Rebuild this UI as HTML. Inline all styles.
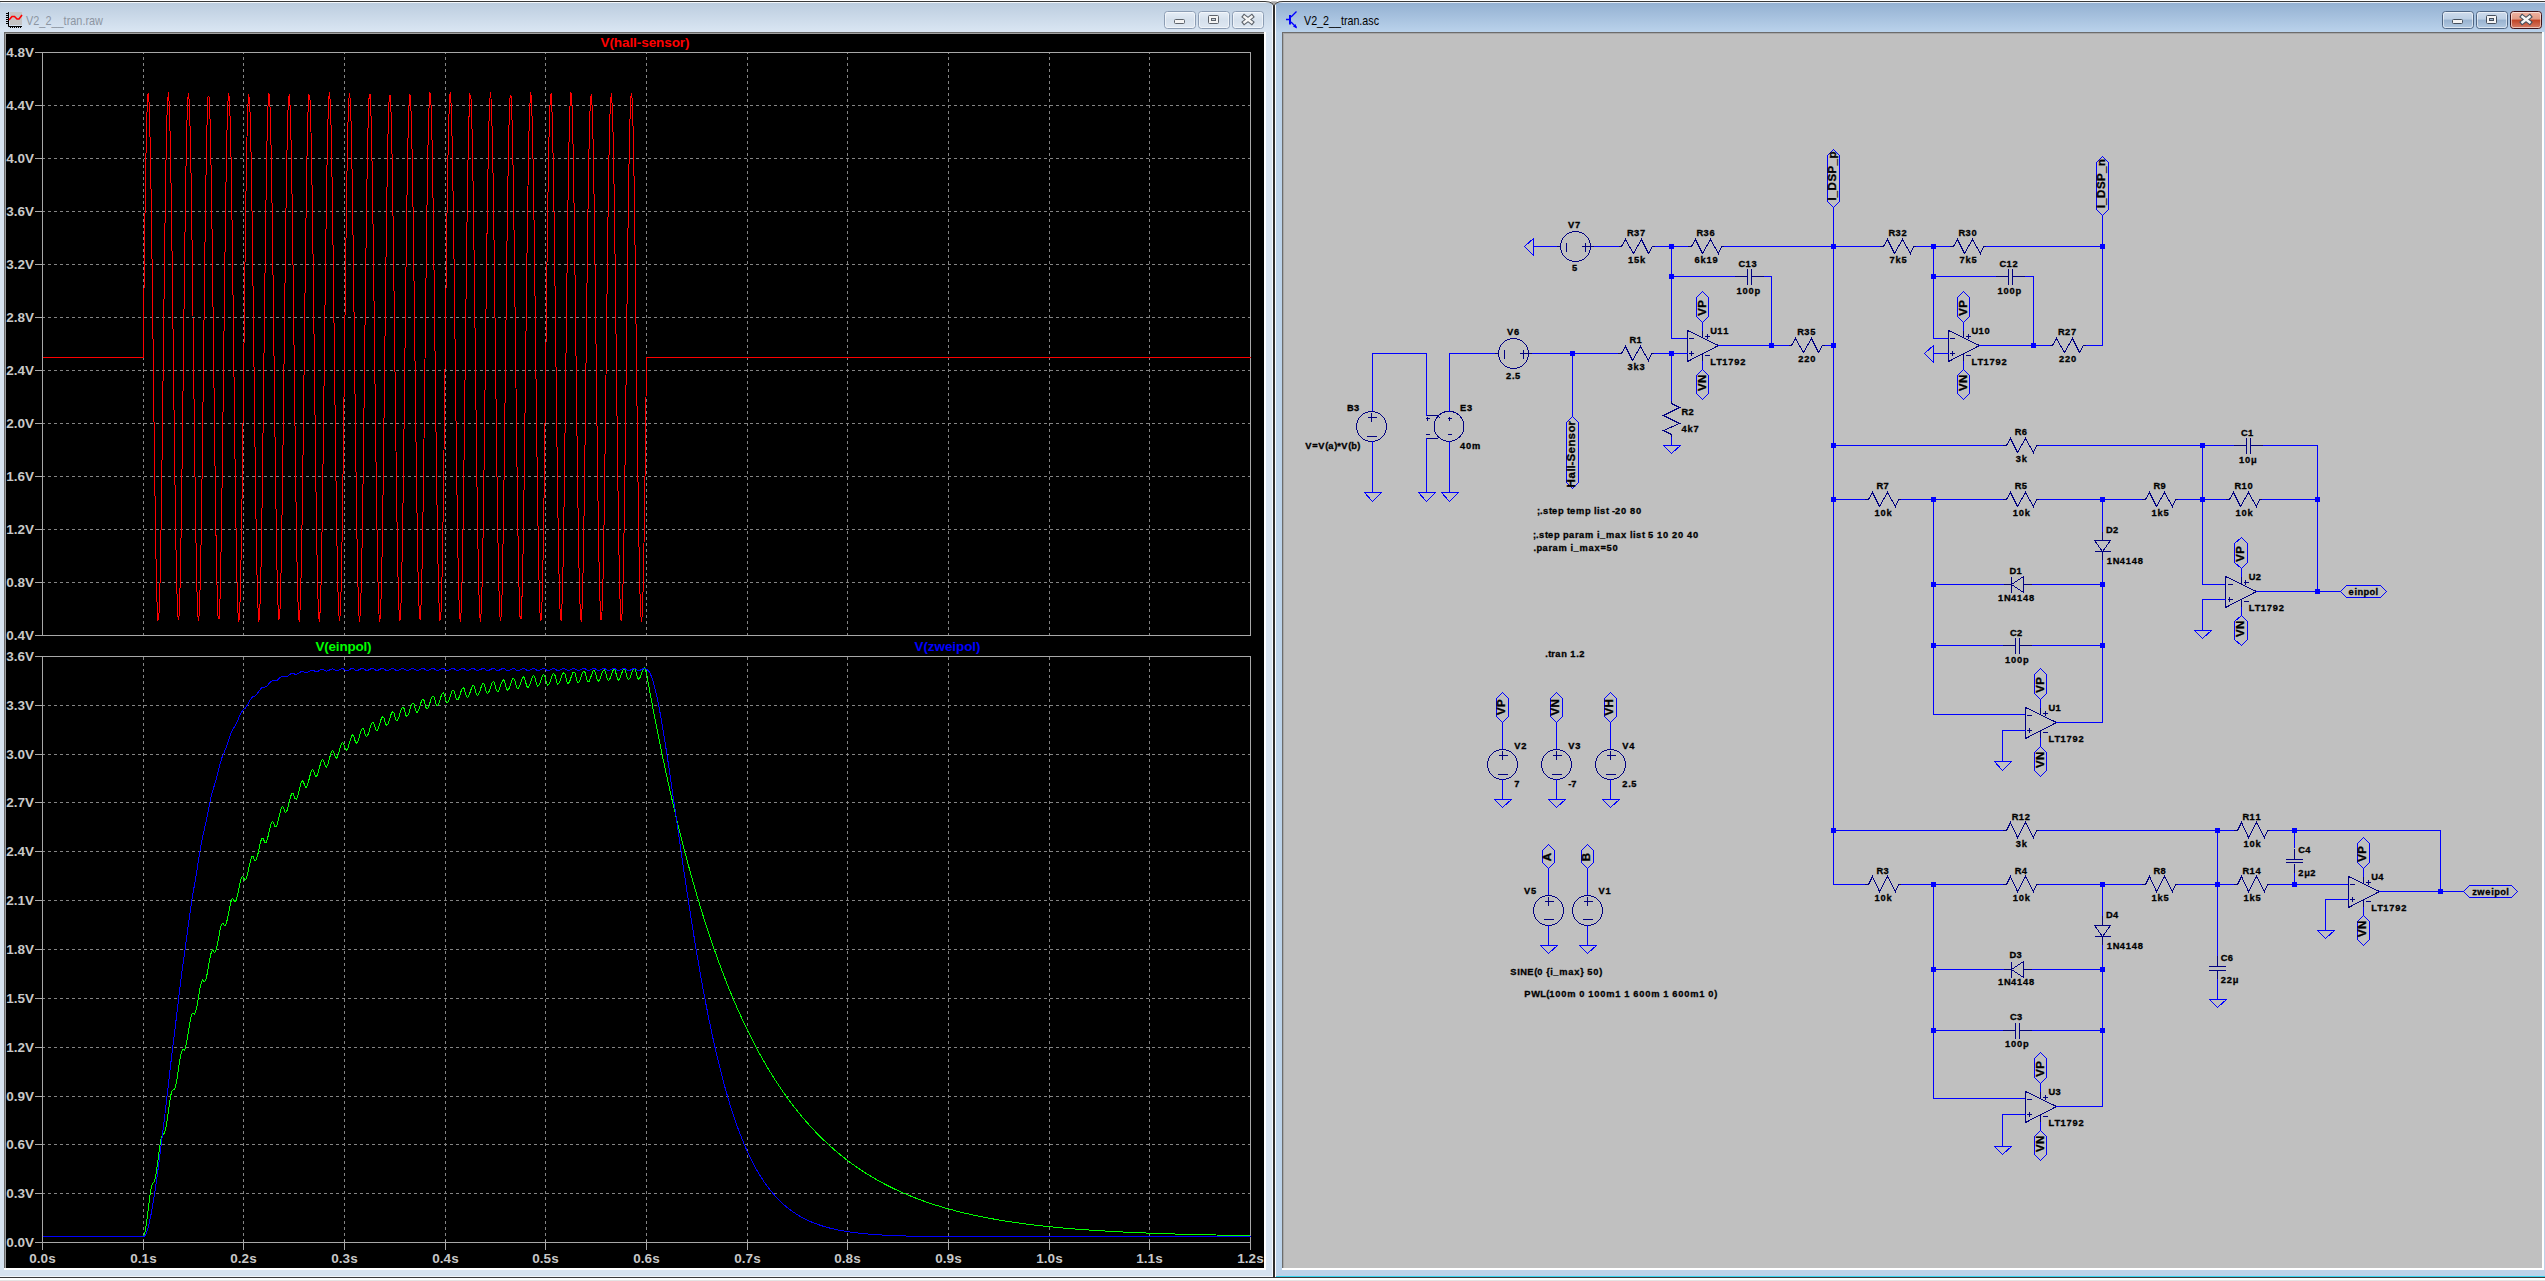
<!DOCTYPE html>
<html><head><meta charset="utf-8"><title>LTspice</title>
<style>
html,body{margin:0;padding:0;background:#f0f0f0;overflow:hidden;}
svg{display:block;font-family:"Liberation Sans",sans-serif;}
</style></head><body>
<svg width="2545" height="1281" viewBox="0 0 2545 1281">
<rect x="0" y="0" width="2545" height="1281" fill="#f0f0f0" />
<rect x="0" y="0" width="2545" height="1" fill="#ffffff" />
<rect x="0" y="1" width="2545" height="1" fill="#3a3a3a" />
<rect x="0" y="1277" width="2545" height="1" fill="#3a3a3a" />
<rect x="0" y="1278" width="2545" height="2" fill="#ffffff" />
<rect x="0" y="1280" width="2545" height="1" fill="#e3e3e3" />
<defs><linearGradient id="tgi" x1="0" y1="0" x2="0" y2="1"><stop offset="0" stop-color="#bccddf"/><stop offset="1" stop-color="#dae6f3"/></linearGradient><linearGradient id="tga" x1="0" y1="0" x2="0" y2="1"><stop offset="0" stop-color="#94b1d2"/><stop offset="1" stop-color="#bad2eb"/></linearGradient><linearGradient id="bti" x1="0" y1="0" x2="0" y2="1"><stop offset="0" stop-color="#e6eef7"/><stop offset="0.5" stop-color="#d5e0ec"/><stop offset="1" stop-color="#dfe8f2"/></linearGradient><linearGradient id="bta" x1="0" y1="0" x2="0" y2="1"><stop offset="0" stop-color="#cfdcec"/><stop offset="0.45" stop-color="#bccfe4"/><stop offset="0.5" stop-color="#98b2cf"/><stop offset="1" stop-color="#b4cbe3"/></linearGradient><linearGradient id="btc" x1="0" y1="0" x2="0" y2="1"><stop offset="0" stop-color="#f0b4a4"/><stop offset="0.45" stop-color="#e29c86"/><stop offset="0.5" stop-color="#c04224"/><stop offset="1" stop-color="#d8806a"/></linearGradient></defs>
<rect x="0" y="2" width="1273" height="1275" fill="#d7e3f0" />
<rect x="0" y="3" width="1273" height="29" fill="url(#tgi)" />
<rect x="1" y="2" width="1271" height="1" fill="#f4f8fc" />
<rect x="1273" y="2" width="2" height="1276" fill="#2e2e2e" />
<rect x="1272" y="5" width="1" height="1271" fill="#f4f8fc" />
<rect x="0" y="1276" width="1273" height="1" fill="#f2f6fa" />
<rect x="4" y="32" width="1262" height="1238" fill="#ffffff" />
<rect x="4" y="32" width="1260" height="1236" fill="#696969" />
<rect x="5" y="33" width="1259" height="1235" fill="#a0a0a0" />
<rect x="6" y="34" width="1258" height="1234" fill="#000000" />
<rect x="1275" y="2" width="1270" height="1275" fill="#bcd3ea" />
<rect x="1276" y="3" width="1269" height="29" fill="url(#tga)" />
<rect x="1275" y="2" width="1" height="1275" fill="#ffffff" />
<rect x="1276" y="2" width="1269" height="1" fill="#e6eef8" />
<rect x="1276" y="1276" width="1269" height="1" fill="#37d4ee" />
<rect x="1282" y="32" width="1262" height="1238" fill="#ffffff" />
<rect x="1282" y="32" width="1260" height="1236" fill="#6c6c6c" />
<rect x="1283" y="33" width="1259" height="1235" fill="#a8a8a8" />
<rect x="1284" y="34" width="1258" height="1234" fill="#c0c0c0" />
<path d="M1265 2 Q1272 2 1274 6 Q1276 2 1283 2 L1283 0 L1265 0 Z" fill="#ffffff"/>
<path d="M1265 1.5 Q1272.5 1.5 1274 6 Q1275.5 1.5 1283 1.5" fill="none" stroke="#3a3a3a" stroke-width="1.2"/>
<path d="M1271 1.2 L1277 1.2 L1274 5 Z" fill="#a8a8a8"/>
<text x="26" y="25" font-size="13.5" fill="#8d96a2" font-family="Liberation Sans" textLength="77" lengthAdjust="spacingAndGlyphs">V2_2__tran.raw</text>
<text x="1304" y="25" font-size="13.5" fill="#000000" font-family="Liberation Sans" textLength="75" lengthAdjust="spacingAndGlyphs">V2_2__tran.asc</text>
<rect x="10" y="12" width="12" height="13" fill="#c4c4c4" />
<path d="M8.5 12 V26.5 H22" stroke="#000" stroke-width="1" fill="none"/>
<rect x="6" y="13" width="2" height="1" fill="#000" />
<rect x="6" y="15" width="2" height="1" fill="#000" />
<rect x="6" y="17" width="2" height="1" fill="#000" />
<rect x="6" y="19" width="2" height="1" fill="#000" />
<rect x="6" y="21" width="2" height="1" fill="#000" />
<rect x="6" y="23" width="2" height="1" fill="#000" />
<rect x="10" y="27" width="1" height="1" fill="#000" />
<rect x="12" y="27" width="1" height="1" fill="#000" />
<rect x="14" y="27" width="1" height="1" fill="#000" />
<rect x="16" y="27" width="1" height="1" fill="#000" />
<rect x="18" y="27" width="1" height="1" fill="#000" />
<rect x="20" y="27" width="1" height="1" fill="#000" />
<polyline points="9,20 12,16.5 14.5,16.5 17,19 19,19 22,15" stroke="#ff0000" stroke-width="1.6" fill="none"/>
<rect x="1289" y="15" width="2" height="9.5" fill="#0000ff"/>
<path d="M1286 19.5 H1289 M1291 17 L1296.5 11.5 M1291 22 L1296.5 27.5" stroke="#0000ff" stroke-width="1.4" fill="none"/>
<path d="M1293 26.5 L1297 28.5 L1295.5 24 Z" fill="#0000ff"/>
<rect x="1164.5" y="11.5" width="31" height="17" rx="3" fill="url(#bti)" stroke="#8c9db4" stroke-width="1"/>
<rect x="1165.5" y="12.5" width="29" height="15" rx="2" fill="none" stroke="#ffffff" stroke-opacity="0.55" stroke-width="1"/>
<rect x="1198.5" y="11.5" width="31" height="17" rx="3" fill="url(#bti)" stroke="#8c9db4" stroke-width="1"/>
<rect x="1199.5" y="12.5" width="29" height="15" rx="2" fill="none" stroke="#ffffff" stroke-opacity="0.55" stroke-width="1"/>
<rect x="1232.5" y="11.5" width="31" height="17" rx="3" fill="url(#bti)" stroke="#8c9db4" stroke-width="1"/>
<rect x="1233.5" y="12.5" width="29" height="15" rx="2" fill="none" stroke="#ffffff" stroke-opacity="0.55" stroke-width="1"/>
<rect x="1174.5" y="19.5" width="10" height="4" rx="1" fill="#f4f4f4" stroke="#5d636b" stroke-width="1"/>
<rect x="1208.5" y="15.5" width="10" height="8" rx="1" fill="#f4f4f4" stroke="#5d636b" stroke-width="1"/>
<rect x="1211.5" y="18.5" width="4" height="2" fill="#c9d3de" stroke="#5d636b" stroke-width="1"/>
<path d="M1244.4 16.7 L1251.6 22.3 M1251.6 16.7 L1244.4 22.3" stroke="#5d636b" stroke-width="4.6" stroke-linecap="square"/>
<path d="M1244.4 16.7 L1251.6 22.3 M1251.6 16.7 L1244.4 22.3" stroke="#f6f6f6" stroke-width="2.4" stroke-linecap="square"/>
<rect x="2442.5" y="11.5" width="31" height="17" rx="3" fill="url(#bta)" stroke="#4f6684" stroke-width="1"/>
<rect x="2443.5" y="12.5" width="29" height="15" rx="2" fill="none" stroke="#ffffff" stroke-opacity="0.55" stroke-width="1"/>
<rect x="2476.5" y="11.5" width="31" height="17" rx="3" fill="url(#bta)" stroke="#4f6684" stroke-width="1"/>
<rect x="2477.5" y="12.5" width="29" height="15" rx="2" fill="none" stroke="#ffffff" stroke-opacity="0.55" stroke-width="1"/>
<rect x="2510.5" y="11.5" width="31" height="17" rx="3" fill="url(#btc)" stroke="#3f1218" stroke-width="1"/>
<rect x="2511.5" y="12.5" width="29" height="15" rx="2" fill="none" stroke="#ffffff" stroke-opacity="0.55" stroke-width="1"/>
<rect x="2452.5" y="19.5" width="10" height="4" rx="1" fill="#f4f4f4" stroke="#454f5c" stroke-width="1"/>
<rect x="2486.5" y="15.5" width="10" height="8" rx="1" fill="#f4f4f4" stroke="#454f5c" stroke-width="1"/>
<rect x="2489.5" y="18.5" width="4" height="2" fill="#9ab4d0" stroke="#454f5c" stroke-width="1"/>
<path d="M2522.4 16.7 L2529.6 22.3 M2529.6 16.7 L2522.4 22.3" stroke="#454f5c" stroke-width="4.6" stroke-linecap="square"/>
<path d="M2522.4 16.7 L2529.6 22.3 M2529.6 16.7 L2522.4 22.3" stroke="#f6f6f6" stroke-width="2.4" stroke-linecap="square"/>
<line x1="43" y1="105.5" x2="1250" y2="105.5" stroke="#848484" stroke-width="1" stroke-dasharray="3 3" stroke-dashoffset="1" shape-rendering="crispEdges"/>
<line x1="43" y1="158.5" x2="1250" y2="158.5" stroke="#848484" stroke-width="1" stroke-dasharray="3 3" stroke-dashoffset="1" shape-rendering="crispEdges"/>
<line x1="43" y1="211.5" x2="1250" y2="211.5" stroke="#848484" stroke-width="1" stroke-dasharray="3 3" stroke-dashoffset="1" shape-rendering="crispEdges"/>
<line x1="43" y1="264.5" x2="1250" y2="264.5" stroke="#848484" stroke-width="1" stroke-dasharray="3 3" stroke-dashoffset="1" shape-rendering="crispEdges"/>
<line x1="43" y1="317.5" x2="1250" y2="317.5" stroke="#848484" stroke-width="1" stroke-dasharray="3 3" stroke-dashoffset="1" shape-rendering="crispEdges"/>
<line x1="43" y1="370.5" x2="1250" y2="370.5" stroke="#848484" stroke-width="1" stroke-dasharray="3 3" stroke-dashoffset="1" shape-rendering="crispEdges"/>
<line x1="43" y1="423.5" x2="1250" y2="423.5" stroke="#848484" stroke-width="1" stroke-dasharray="3 3" stroke-dashoffset="1" shape-rendering="crispEdges"/>
<line x1="43" y1="476.5" x2="1250" y2="476.5" stroke="#848484" stroke-width="1" stroke-dasharray="3 3" stroke-dashoffset="1" shape-rendering="crispEdges"/>
<line x1="43" y1="529.5" x2="1250" y2="529.5" stroke="#848484" stroke-width="1" stroke-dasharray="3 3" stroke-dashoffset="1" shape-rendering="crispEdges"/>
<line x1="43" y1="582.5" x2="1250" y2="582.5" stroke="#848484" stroke-width="1" stroke-dasharray="3 3" stroke-dashoffset="1" shape-rendering="crispEdges"/>
<line x1="143.5" y1="53" x2="143.5" y2="635" stroke="#848484" stroke-width="1" stroke-dasharray="3 3" stroke-dashoffset="2" shape-rendering="crispEdges"/>
<line x1="243.5" y1="53" x2="243.5" y2="635" stroke="#848484" stroke-width="1" stroke-dasharray="3 3" stroke-dashoffset="2" shape-rendering="crispEdges"/>
<line x1="344.5" y1="53" x2="344.5" y2="635" stroke="#848484" stroke-width="1" stroke-dasharray="3 3" stroke-dashoffset="2" shape-rendering="crispEdges"/>
<line x1="445.5" y1="53" x2="445.5" y2="635" stroke="#848484" stroke-width="1" stroke-dasharray="3 3" stroke-dashoffset="2" shape-rendering="crispEdges"/>
<line x1="545.5" y1="53" x2="545.5" y2="635" stroke="#848484" stroke-width="1" stroke-dasharray="3 3" stroke-dashoffset="2" shape-rendering="crispEdges"/>
<line x1="646.5" y1="53" x2="646.5" y2="635" stroke="#848484" stroke-width="1" stroke-dasharray="3 3" stroke-dashoffset="2" shape-rendering="crispEdges"/>
<line x1="747.5" y1="53" x2="747.5" y2="635" stroke="#848484" stroke-width="1" stroke-dasharray="3 3" stroke-dashoffset="2" shape-rendering="crispEdges"/>
<line x1="847.5" y1="53" x2="847.5" y2="635" stroke="#848484" stroke-width="1" stroke-dasharray="3 3" stroke-dashoffset="2" shape-rendering="crispEdges"/>
<line x1="948.5" y1="53" x2="948.5" y2="635" stroke="#848484" stroke-width="1" stroke-dasharray="3 3" stroke-dashoffset="2" shape-rendering="crispEdges"/>
<line x1="1049.5" y1="53" x2="1049.5" y2="635" stroke="#848484" stroke-width="1" stroke-dasharray="3 3" stroke-dashoffset="2" shape-rendering="crispEdges"/>
<line x1="1149.5" y1="53" x2="1149.5" y2="635" stroke="#848484" stroke-width="1" stroke-dasharray="3 3" stroke-dashoffset="2" shape-rendering="crispEdges"/>
<rect x="42.5" y="52.5" width="1208" height="583" fill="none" stroke="#a8a8a8" stroke-width="1" shape-rendering="crispEdges"/>
<rect x="35" y="52" width="7" height="1" fill="#a8a8a8" />
<text x="34" y="57" font-size="13.5" fill="#c8c8c8" text-anchor="end" font-weight="bold">4.8V</text>
<rect x="35" y="105" width="7" height="1" fill="#a8a8a8" />
<text x="34" y="110" font-size="13.5" fill="#c8c8c8" text-anchor="end" font-weight="bold">4.4V</text>
<rect x="35" y="158" width="7" height="1" fill="#a8a8a8" />
<text x="34" y="163" font-size="13.5" fill="#c8c8c8" text-anchor="end" font-weight="bold">4.0V</text>
<rect x="35" y="211" width="7" height="1" fill="#a8a8a8" />
<text x="34" y="216" font-size="13.5" fill="#c8c8c8" text-anchor="end" font-weight="bold">3.6V</text>
<rect x="35" y="264" width="7" height="1" fill="#a8a8a8" />
<text x="34" y="269" font-size="13.5" fill="#c8c8c8" text-anchor="end" font-weight="bold">3.2V</text>
<rect x="35" y="317" width="7" height="1" fill="#a8a8a8" />
<text x="34" y="322" font-size="13.5" fill="#c8c8c8" text-anchor="end" font-weight="bold">2.8V</text>
<rect x="35" y="370" width="7" height="1" fill="#a8a8a8" />
<text x="34" y="375" font-size="13.5" fill="#c8c8c8" text-anchor="end" font-weight="bold">2.4V</text>
<rect x="35" y="423" width="7" height="1" fill="#a8a8a8" />
<text x="34" y="428" font-size="13.5" fill="#c8c8c8" text-anchor="end" font-weight="bold">2.0V</text>
<rect x="35" y="476" width="7" height="1" fill="#a8a8a8" />
<text x="34" y="481" font-size="13.5" fill="#c8c8c8" text-anchor="end" font-weight="bold">1.6V</text>
<rect x="35" y="529" width="7" height="1" fill="#a8a8a8" />
<text x="34" y="534" font-size="13.5" fill="#c8c8c8" text-anchor="end" font-weight="bold">1.2V</text>
<rect x="35" y="582" width="7" height="1" fill="#a8a8a8" />
<text x="34" y="587" font-size="13.5" fill="#c8c8c8" text-anchor="end" font-weight="bold">0.8V</text>
<rect x="35" y="635" width="7" height="1" fill="#a8a8a8" />
<text x="34" y="640" font-size="13.5" fill="#c8c8c8" text-anchor="end" font-weight="bold">0.4V</text>
<line x1="43" y1="705.5" x2="1250" y2="705.5" stroke="#848484" stroke-width="1" stroke-dasharray="3 3" stroke-dashoffset="1" shape-rendering="crispEdges"/>
<line x1="43" y1="754.5" x2="1250" y2="754.5" stroke="#848484" stroke-width="1" stroke-dasharray="3 3" stroke-dashoffset="1" shape-rendering="crispEdges"/>
<line x1="43" y1="802.5" x2="1250" y2="802.5" stroke="#848484" stroke-width="1" stroke-dasharray="3 3" stroke-dashoffset="1" shape-rendering="crispEdges"/>
<line x1="43" y1="851.5" x2="1250" y2="851.5" stroke="#848484" stroke-width="1" stroke-dasharray="3 3" stroke-dashoffset="1" shape-rendering="crispEdges"/>
<line x1="43" y1="900.5" x2="1250" y2="900.5" stroke="#848484" stroke-width="1" stroke-dasharray="3 3" stroke-dashoffset="1" shape-rendering="crispEdges"/>
<line x1="43" y1="949.5" x2="1250" y2="949.5" stroke="#848484" stroke-width="1" stroke-dasharray="3 3" stroke-dashoffset="1" shape-rendering="crispEdges"/>
<line x1="43" y1="998.5" x2="1250" y2="998.5" stroke="#848484" stroke-width="1" stroke-dasharray="3 3" stroke-dashoffset="1" shape-rendering="crispEdges"/>
<line x1="43" y1="1047.5" x2="1250" y2="1047.5" stroke="#848484" stroke-width="1" stroke-dasharray="3 3" stroke-dashoffset="1" shape-rendering="crispEdges"/>
<line x1="43" y1="1096.5" x2="1250" y2="1096.5" stroke="#848484" stroke-width="1" stroke-dasharray="3 3" stroke-dashoffset="1" shape-rendering="crispEdges"/>
<line x1="43" y1="1144.5" x2="1250" y2="1144.5" stroke="#848484" stroke-width="1" stroke-dasharray="3 3" stroke-dashoffset="1" shape-rendering="crispEdges"/>
<line x1="43" y1="1193.5" x2="1250" y2="1193.5" stroke="#848484" stroke-width="1" stroke-dasharray="3 3" stroke-dashoffset="1" shape-rendering="crispEdges"/>
<line x1="143.5" y1="657" x2="143.5" y2="1242" stroke="#848484" stroke-width="1" stroke-dasharray="3 3" stroke-dashoffset="0" shape-rendering="crispEdges"/>
<line x1="243.5" y1="657" x2="243.5" y2="1242" stroke="#848484" stroke-width="1" stroke-dasharray="3 3" stroke-dashoffset="0" shape-rendering="crispEdges"/>
<line x1="344.5" y1="657" x2="344.5" y2="1242" stroke="#848484" stroke-width="1" stroke-dasharray="3 3" stroke-dashoffset="0" shape-rendering="crispEdges"/>
<line x1="445.5" y1="657" x2="445.5" y2="1242" stroke="#848484" stroke-width="1" stroke-dasharray="3 3" stroke-dashoffset="0" shape-rendering="crispEdges"/>
<line x1="545.5" y1="657" x2="545.5" y2="1242" stroke="#848484" stroke-width="1" stroke-dasharray="3 3" stroke-dashoffset="0" shape-rendering="crispEdges"/>
<line x1="646.5" y1="657" x2="646.5" y2="1242" stroke="#848484" stroke-width="1" stroke-dasharray="3 3" stroke-dashoffset="0" shape-rendering="crispEdges"/>
<line x1="747.5" y1="657" x2="747.5" y2="1242" stroke="#848484" stroke-width="1" stroke-dasharray="3 3" stroke-dashoffset="0" shape-rendering="crispEdges"/>
<line x1="847.5" y1="657" x2="847.5" y2="1242" stroke="#848484" stroke-width="1" stroke-dasharray="3 3" stroke-dashoffset="0" shape-rendering="crispEdges"/>
<line x1="948.5" y1="657" x2="948.5" y2="1242" stroke="#848484" stroke-width="1" stroke-dasharray="3 3" stroke-dashoffset="0" shape-rendering="crispEdges"/>
<line x1="1049.5" y1="657" x2="1049.5" y2="1242" stroke="#848484" stroke-width="1" stroke-dasharray="3 3" stroke-dashoffset="0" shape-rendering="crispEdges"/>
<line x1="1149.5" y1="657" x2="1149.5" y2="1242" stroke="#848484" stroke-width="1" stroke-dasharray="3 3" stroke-dashoffset="0" shape-rendering="crispEdges"/>
<rect x="42.5" y="656.5" width="1208" height="586" fill="none" stroke="#a8a8a8" stroke-width="1" shape-rendering="crispEdges"/>
<rect x="35" y="656" width="7" height="1" fill="#a8a8a8" />
<text x="34" y="661" font-size="13.5" fill="#c8c8c8" text-anchor="end" font-weight="bold">3.6V</text>
<rect x="35" y="705" width="7" height="1" fill="#a8a8a8" />
<text x="34" y="710" font-size="13.5" fill="#c8c8c8" text-anchor="end" font-weight="bold">3.3V</text>
<rect x="35" y="754" width="7" height="1" fill="#a8a8a8" />
<text x="34" y="759" font-size="13.5" fill="#c8c8c8" text-anchor="end" font-weight="bold">3.0V</text>
<rect x="35" y="802" width="7" height="1" fill="#a8a8a8" />
<text x="34" y="807" font-size="13.5" fill="#c8c8c8" text-anchor="end" font-weight="bold">2.7V</text>
<rect x="35" y="851" width="7" height="1" fill="#a8a8a8" />
<text x="34" y="856" font-size="13.5" fill="#c8c8c8" text-anchor="end" font-weight="bold">2.4V</text>
<rect x="35" y="900" width="7" height="1" fill="#a8a8a8" />
<text x="34" y="905" font-size="13.5" fill="#c8c8c8" text-anchor="end" font-weight="bold">2.1V</text>
<rect x="35" y="949" width="7" height="1" fill="#a8a8a8" />
<text x="34" y="954" font-size="13.5" fill="#c8c8c8" text-anchor="end" font-weight="bold">1.8V</text>
<rect x="35" y="998" width="7" height="1" fill="#a8a8a8" />
<text x="34" y="1003" font-size="13.5" fill="#c8c8c8" text-anchor="end" font-weight="bold">1.5V</text>
<rect x="35" y="1047" width="7" height="1" fill="#a8a8a8" />
<text x="34" y="1052" font-size="13.5" fill="#c8c8c8" text-anchor="end" font-weight="bold">1.2V</text>
<rect x="35" y="1096" width="7" height="1" fill="#a8a8a8" />
<text x="34" y="1101" font-size="13.5" fill="#c8c8c8" text-anchor="end" font-weight="bold">0.9V</text>
<rect x="35" y="1144" width="7" height="1" fill="#a8a8a8" />
<text x="34" y="1149" font-size="13.5" fill="#c8c8c8" text-anchor="end" font-weight="bold">0.6V</text>
<rect x="35" y="1193" width="7" height="1" fill="#a8a8a8" />
<text x="34" y="1198" font-size="13.5" fill="#c8c8c8" text-anchor="end" font-weight="bold">0.3V</text>
<rect x="35" y="1242" width="7" height="1" fill="#a8a8a8" />
<text x="34" y="1247" font-size="13.5" fill="#c8c8c8" text-anchor="end" font-weight="bold">0.0V</text>
<rect x="42" y="1240" width="1" height="10" fill="#a8a8a8" />
<text x="42.5" y="1263" font-size="13.5" fill="#c8c8c8" text-anchor="middle" font-weight="bold">0.0s</text>
<rect x="143" y="1240" width="1" height="10" fill="#a8a8a8" />
<text x="143.5" y="1263" font-size="13.5" fill="#c8c8c8" text-anchor="middle" font-weight="bold">0.1s</text>
<rect x="243" y="1240" width="1" height="10" fill="#a8a8a8" />
<text x="243.5" y="1263" font-size="13.5" fill="#c8c8c8" text-anchor="middle" font-weight="bold">0.2s</text>
<rect x="344" y="1240" width="1" height="10" fill="#a8a8a8" />
<text x="344.5" y="1263" font-size="13.5" fill="#c8c8c8" text-anchor="middle" font-weight="bold">0.3s</text>
<rect x="445" y="1240" width="1" height="10" fill="#a8a8a8" />
<text x="445.5" y="1263" font-size="13.5" fill="#c8c8c8" text-anchor="middle" font-weight="bold">0.4s</text>
<rect x="545" y="1240" width="1" height="10" fill="#a8a8a8" />
<text x="545.5" y="1263" font-size="13.5" fill="#c8c8c8" text-anchor="middle" font-weight="bold">0.5s</text>
<rect x="646" y="1240" width="1" height="10" fill="#a8a8a8" />
<text x="646.5" y="1263" font-size="13.5" fill="#c8c8c8" text-anchor="middle" font-weight="bold">0.6s</text>
<rect x="747" y="1240" width="1" height="10" fill="#a8a8a8" />
<text x="747.5" y="1263" font-size="13.5" fill="#c8c8c8" text-anchor="middle" font-weight="bold">0.7s</text>
<rect x="847" y="1240" width="1" height="10" fill="#a8a8a8" />
<text x="847.5" y="1263" font-size="13.5" fill="#c8c8c8" text-anchor="middle" font-weight="bold">0.8s</text>
<rect x="948" y="1240" width="1" height="10" fill="#a8a8a8" />
<text x="948.5" y="1263" font-size="13.5" fill="#c8c8c8" text-anchor="middle" font-weight="bold">0.9s</text>
<rect x="1049" y="1240" width="1" height="10" fill="#a8a8a8" />
<text x="1049.5" y="1263" font-size="13.5" fill="#c8c8c8" text-anchor="middle" font-weight="bold">1.0s</text>
<rect x="1149" y="1240" width="1" height="10" fill="#a8a8a8" />
<text x="1149.5" y="1263" font-size="13.5" fill="#c8c8c8" text-anchor="middle" font-weight="bold">1.1s</text>
<rect x="1250" y="1240" width="1" height="10" fill="#a8a8a8" />
<text x="1250.5" y="1263" font-size="13.5" fill="#c8c8c8" text-anchor="middle" font-weight="bold">1.2s</text>
<text x="600.5" y="47" font-size="13.5" fill="#ff0000" font-weight="bold" textLength="89" lengthAdjust="spacing">V(hall-sensor)</text>
<text x="315.5" y="651" font-size="13.5" fill="#00ff00" font-weight="bold" textLength="56" lengthAdjust="spacing">V(einpol)</text>
<text x="914.5" y="651" font-size="13.5" fill="#0000ff" font-weight="bold" textLength="66" lengthAdjust="spacing">V(zweipol)</text>
<defs><clipPath id="cpt"><rect x="42" y="52" width="1209" height="584"/></clipPath><clipPath id="cpb"><rect x="42" y="656" width="1209" height="587"/></clipPath></defs>
<polyline points="42.50,357.25 143.17,357.25 143.17,357.25 143.97,291.43 144.93,218.71 145.80,163.16 146.79,117.54 147.79,94.44 148.51,93.45 149.20,104.97 150.30,147.30 151.12,194.74 151.92,251.69 153.11,346.73 154.03,422.25 155.13,505.31 156.06,561.71 157.06,603.79 157.82,619.72 158.83,618.20 159.95,586.55 160.90,537.86 161.95,465.26 162.98,383.90 163.69,324.75 164.76,240.63 165.74,174.27 166.58,131.01 167.28,106.48 168.40,92.31 169.32,104.74 170.37,143.88 171.49,211.08 172.54,289.51 173.69,383.66 174.57,454.44 175.66,530.98 176.57,580.01 177.72,616.33 178.85,619.66 179.58,604.43 180.33,575.39 181.13,531.84 182.30,449.11 183.20,376.27 184.20,294.20 185.04,229.94 185.98,168.18 186.86,124.96 187.72,99.43 188.70,92.94 189.68,110.91 190.82,160.35 191.84,226.31 193.00,315.74 194.11,407.52 195.29,498.05 196.32,561.37 197.08,595.60 198.20,620.83 199.37,613.23 200.51,573.33 201.48,517.70 202.53,441.77 203.32,377.85 204.42,287.48 205.39,214.22 206.22,161.96 206.94,127.10 208.05,96.11 209.24,97.44 209.96,115.91 211.05,166.11 211.94,223.84 212.70,281.41 213.54,349.18 214.61,436.56 215.73,518.60 216.44,560.69 217.43,602.81 218.14,618.66 219.18,618.79 220.04,598.42 221.16,545.76 222.34,466.22 223.28,391.80 224.47,294.33 225.31,229.74 226.03,180.98 227.02,129.31 227.72,105.43 228.50,92.94 229.39,97.83 230.38,126.65 231.15,163.96 231.85,208.24 232.97,292.40 233.82,361.41 234.98,455.52 236.12,534.84 236.99,581.29 237.91,612.11 238.86,622.21 239.87,607.73 240.85,569.84 241.82,513.27 242.81,440.23 243.97,345.89 244.91,269.83 245.81,203.81 246.86,142.58 247.66,110.72 248.50,93.99 249.68,100.66 250.62,131.07 251.58,181.93 252.27,228.46 253.17,297.18 254.14,377.39 254.84,433.75 255.83,507.58 256.84,567.46 257.55,597.95 258.55,620.36 259.47,618.54 260.50,591.34 261.36,549.92 262.40,481.81 263.45,399.41 264.15,342.06 264.87,283.89 265.89,207.55 267.06,139.37 267.87,108.54 268.78,92.85 269.77,99.82 270.61,125.13 271.48,167.79 272.32,222.42 273.19,288.56 274.18,369.17 275.01,437.03 275.89,502.19 276.96,567.06 277.66,597.09 278.63,619.79 279.68,617.34 280.53,595.27 281.32,559.29 282.41,490.56 283.22,429.47 283.99,365.98 284.90,291.94 285.93,213.73 286.67,166.79 287.52,125.29 288.37,99.76 289.47,93.74 290.38,111.99 291.49,160.93 292.26,208.91 293.12,271.98 294.13,354.12 295.26,445.82 296.17,512.36 296.97,560.52 297.71,594.24 298.66,618.56 299.45,621.47 300.54,599.56 301.64,548.93 302.42,499.39 303.24,437.77 304.33,348.85 305.34,267.34 306.43,189.30 307.29,141.03 308.04,111.40 308.87,94.25 309.96,98.37 310.78,121.17 311.64,161.48 312.53,218.26 313.43,285.92 314.32,358.68 315.47,451.51 316.23,507.27 316.92,550.31 318.07,602.06 319.20,622.03 320.38,608.15 321.29,574.53 322.45,506.53 323.60,420.01 324.40,354.76 325.46,268.84 326.56,189.55 327.58,133.84 328.53,102.04 329.36,92.27 330.21,100.72 331.01,125.06 331.73,159.29 332.71,221.58 333.54,284.33 334.63,373.71 335.34,431.21 336.48,515.17 337.51,574.49 338.66,613.94 339.80,620.83 340.94,594.89 341.91,548.85 342.60,505.23 343.66,425.83 344.43,362.86 345.27,294.37 346.29,217.08 347.23,157.56 348.13,117.35 349.28,93.05 350.28,99.36 351.13,124.62 351.95,163.84 353.06,237.44 353.99,309.67 355.07,398.42 355.93,466.49 356.71,521.71 357.67,575.41 358.76,613.22 359.53,622.19 360.62,609.06 361.76,564.11 362.85,496.97 363.95,413.11 364.64,356.61 365.64,275.20 366.76,193.96 367.47,152.10 368.29,116.28 369.11,96.22 370.06,94.26 370.96,113.50 371.88,153.06 372.96,220.07 373.64,271.33 374.35,328.70 375.10,390.45 375.85,450.31 376.57,503.18 377.74,572.79 378.86,612.43 379.59,621.97 380.52,614.23 381.37,588.54 382.21,546.96 383.07,491.00 384.08,413.48 385.06,332.92 385.93,263.34 386.71,206.33 387.56,154.50 388.31,120.57 389.27,95.88 390.31,95.65 391.19,116.80 391.91,147.90 392.69,192.87 393.56,254.82 394.55,333.88 395.63,422.37 396.50,489.30 397.59,558.27 398.59,601.51 399.49,620.44 400.36,619.06 401.30,596.23 402.34,547.33 403.23,488.97 404.27,409.25 405.18,333.83 405.99,268.72 406.95,199.33 407.98,139.98 408.70,111.62 409.60,93.69 410.50,96.35 411.63,128.34 412.78,190.20 413.65,251.71 414.79,342.69 415.87,431.22 416.69,492.97 417.61,551.77 418.35,588.06 419.45,618.33 420.47,619.45 421.60,590.01 422.68,534.81 423.70,464.28 424.75,380.24 425.72,300.63 426.46,243.14 427.44,176.40 428.13,139.33 428.88,110.10 429.96,92.40 430.67,96.86 431.40,114.72 432.13,145.33 433.26,213.17 434.03,270.61 434.73,326.64 435.84,417.68 436.58,475.54 437.69,548.99 438.72,596.73 439.82,620.99 440.98,612.95 441.96,580.30 443.05,520.01 443.75,470.61 444.82,385.78 445.76,308.22 446.81,227.41 447.55,178.08 448.61,124.32 449.76,94.72 450.48,93.24 451.33,108.42 452.29,146.83 453.39,213.42 454.20,273.37 454.98,336.02 455.79,402.79 456.78,480.35 457.85,550.11 458.73,592.27 459.60,616.49 460.48,621.65 461.34,607.46 462.24,573.69 462.96,533.79 463.90,469.37 465.07,375.89 465.97,302.50 467.03,221.20 467.79,171.26 468.83,121.06 469.89,94.78 470.91,96.59 471.86,121.72 472.79,166.21 473.79,232.42 474.93,321.34 475.69,384.02 476.42,443.09 477.48,519.94 478.63,582.87 479.58,613.53 480.48,622.16 481.53,605.96 482.31,576.66 483.13,531.95 483.91,478.43 484.89,401.90 485.73,332.43 486.54,267.90 487.57,193.50 488.73,130.14 489.57,102.66 490.61,92.50 491.50,105.85 492.61,149.45 493.59,208.53 494.41,268.81 495.20,332.78 495.90,390.24 496.83,463.79 497.70,525.42 498.47,569.39 499.34,604.09 500.19,620.70 501.26,615.45 502.02,594.32 503.20,535.58 504.13,472.33 505.11,394.62 506.03,318.79 507.14,232.45 508.24,161.15 509.20,117.11 510.13,95.12 511.18,96.51 512.29,128.29 513.18,173.42 514.23,244.91 515.40,337.84 516.32,413.46 517.12,475.71 517.92,530.78 518.97,585.83 519.99,616.38 521.16,619.14 522.27,589.66 523.08,550.63 523.86,501.26 524.67,440.68 525.45,377.70 526.49,292.44 527.61,208.59 528.75,141.61 529.56,109.86 530.68,92.29 531.52,100.22 532.42,128.06 533.47,183.16 534.20,232.62 534.93,288.76 536.03,379.27 536.86,446.29 537.73,509.56 538.71,567.62 539.73,607.61 540.42,620.37 541.27,619.39 542.17,598.23 543.10,556.64 543.89,508.00 544.87,435.46 546.04,340.27 546.92,269.09 547.88,199.36 548.62,154.59 549.45,117.87 550.47,94.32 551.21,93.74 552.34,119.69 553.48,175.58 554.21,224.09 555.37,313.72 556.24,385.66 557.32,470.69 558.38,542.66 559.22,585.11 560.24,616.09 561.25,620.92 562.35,596.94 563.16,560.62 564.23,494.12 565.40,404.20 566.42,319.95 567.37,244.60 568.12,192.59 569.05,139.91 569.91,107.43 570.96,92.28 571.98,104.60 572.95,139.90 573.73,182.61 574.74,252.97 575.74,332.98 576.51,396.86 577.65,485.10 578.66,551.01 579.41,587.51 580.56,618.96 581.32,621.44 582.17,606.75 583.22,564.87 584.20,505.30 585.16,433.53 586.17,351.06 587.09,276.69 587.93,213.90 588.70,164.78 589.42,129.07 590.47,97.93 591.53,94.31 592.49,115.68 593.55,163.98 594.41,219.36 595.23,281.00 596.11,352.48 597.23,443.79 597.94,496.42 598.88,555.61 599.69,593.21 600.76,619.73 601.62,619.97 602.47,601.63 603.36,564.30 604.32,506.46 605.39,426.20 606.25,355.70 607.36,265.76 608.10,211.20 608.92,159.95 609.66,124.90 610.40,101.87 611.48,92.82 612.53,112.51 613.31,144.09 614.08,188.31 614.98,251.09 616.04,335.60 617.13,425.37 618.19,504.95 619.18,564.47 619.94,597.42 620.82,618.86 621.60,621.32 622.55,603.31 623.52,562.75 624.31,515.96 625.12,457.80 626.20,371.23 626.90,313.57 627.99,228.96 629.12,156.60 630.28,108.23 631.16,93.00 632.12,98.94 633.10,128.66 634.10,181.07 635.28,263.86 636.31,347.01 637.14,415.60 638.26,500.41 639.19,558.14 640.18,601.09 641.23,621.51 641.91,619.68 642.99,593.02 644.00,543.44 644.94,481.54 645.88,407.90 646.50,357.25 647.00,357.25 1250.50,357.25" fill="none" stroke="#ff0000" stroke-width="1" clip-path="url(#cpt)" shape-rendering="crispEdges"/>
<polyline points="42.50,1236.97 43.51,1236.97 44.51,1236.97 45.52,1236.97 46.53,1236.97 47.53,1236.97 48.54,1236.97 49.55,1236.97 50.55,1236.97 51.56,1236.97 52.57,1236.97 53.57,1236.97 54.58,1236.97 55.59,1236.97 56.59,1236.97 57.60,1236.97 58.61,1236.97 59.61,1236.97 60.62,1236.97 61.63,1236.97 62.63,1236.97 63.64,1236.97 64.65,1236.97 65.65,1236.97 66.66,1236.97 67.67,1236.97 68.67,1236.97 69.68,1236.97 70.69,1236.97 71.69,1236.97 72.70,1236.97 73.71,1236.97 74.71,1236.97 75.72,1236.97 76.73,1236.97 77.73,1236.97 78.74,1236.97 79.75,1236.97 80.75,1236.97 81.76,1236.97 82.77,1236.97 83.77,1236.97 84.78,1236.97 85.79,1236.97 86.79,1236.97 87.80,1236.97 88.81,1236.97 89.81,1236.97 90.82,1236.97 91.83,1236.97 92.83,1236.97 93.84,1236.97 94.85,1236.97 95.85,1236.97 96.86,1236.97 97.87,1236.97 98.87,1236.97 99.88,1236.97 100.89,1236.97 101.89,1236.97 102.90,1236.97 103.91,1236.97 104.91,1236.97 105.92,1236.97 106.93,1236.97 107.93,1236.97 108.94,1236.97 109.95,1236.97 110.95,1236.97 111.96,1236.97 112.97,1236.97 113.97,1236.97 114.98,1236.97 115.99,1236.97 116.99,1236.97 118.00,1236.97 119.01,1236.97 120.01,1236.97 121.02,1236.97 122.03,1236.97 123.03,1236.97 124.04,1236.97 125.05,1236.97 126.05,1236.97 127.06,1236.97 128.07,1236.97 129.07,1236.97 130.08,1236.97 131.09,1236.97 132.09,1236.97 133.10,1236.97 134.11,1236.97 135.11,1236.97 136.12,1236.97 137.13,1236.97 138.13,1236.97 139.14,1236.97 140.15,1236.97 141.15,1236.97 142.16,1236.97 143.17,1236.97 144.17,1235.29 145.18,1231.22 146.19,1225.13 147.19,1217.58 148.20,1209.29 149.21,1201.05 150.21,1193.67 151.22,1187.84 152.23,1184.15 153.23,1182.97 154.24,1181.83 155.25,1178.29 156.25,1172.73 157.26,1165.70 158.27,1157.93 159.27,1150.20 160.28,1143.32 161.29,1138.00 162.29,1134.80 163.30,1134.11 164.31,1133.45 165.31,1130.40 166.32,1125.31 167.33,1118.76 168.33,1111.45 169.34,1104.18 170.35,1097.76 171.35,1092.89 172.36,1090.15 173.37,1089.89 174.37,1089.68 175.38,1087.07 176.39,1082.41 177.39,1076.28 178.40,1069.39 179.41,1062.55 180.41,1056.54 181.42,1052.08 182.43,1049.74 183.43,1049.89 184.44,1050.08 185.45,1047.85 186.45,1043.59 187.46,1037.84 188.47,1031.34 189.47,1024.87 190.48,1019.24 191.49,1015.15 192.49,1013.18 193.50,1013.69 194.51,1014.24 195.51,1012.37 196.52,1008.46 197.53,1003.07 198.53,996.91 199.54,990.78 200.55,985.49 201.55,981.74 202.56,980.10 203.57,980.94 204.57,981.81 205.58,980.27 206.59,976.68 207.59,971.60 208.60,965.75 209.61,959.94 210.61,954.95 211.62,951.50 212.63,950.17 213.63,951.31 214.64,952.47 215.65,951.22 216.65,947.92 217.66,943.12 218.67,937.56 219.67,932.03 220.68,927.32 221.69,924.15 222.69,923.08 223.70,924.49 224.71,925.93 225.71,924.94 226.72,921.89 227.73,917.36 228.73,912.06 229.74,906.78 230.75,902.32 231.75,899.39 232.76,898.57 233.77,900.23 234.77,901.90 235.78,901.15 236.79,898.35 237.79,894.05 238.80,888.98 239.81,883.93 240.81,879.69 241.82,876.99 242.83,876.40 243.83,878.27 244.84,880.17 245.85,879.63 246.85,877.04 247.86,872.95 248.87,868.09 249.87,863.25 250.88,859.22 251.89,856.73 252.89,856.33 253.90,858.41 254.91,860.50 255.91,860.16 256.92,857.76 257.93,853.87 258.93,849.20 259.94,844.54 260.95,840.70 261.95,838.39 262.96,838.18 263.97,840.43 264.97,842.70 265.98,842.54 266.99,840.32 267.99,836.60 269.00,832.10 270.01,827.61 271.01,823.94 272.02,821.80 273.03,821.75 274.03,824.17 275.04,826.60 276.05,826.60 277.05,824.54 278.06,820.97 279.07,816.63 280.07,812.30 281.08,808.78 282.09,806.78 283.09,806.89 284.10,809.45 285.11,812.03 286.11,812.18 287.12,810.25 288.13,806.83 289.13,802.63 290.14,798.44 291.15,795.05 292.15,793.20 293.16,793.44 294.17,796.14 295.17,798.85 296.18,799.12 297.19,797.33 298.19,794.04 299.20,789.96 300.21,785.90 301.21,782.64 302.22,780.91 303.23,781.27 304.23,784.09 305.24,786.92 306.25,787.31 307.25,785.64 308.26,782.46 309.27,778.50 310.27,774.55 311.28,771.40 312.29,769.78 313.29,770.26 314.30,773.18 315.31,776.12 316.31,776.63 317.32,775.06 318.33,771.99 319.33,768.13 320.34,764.28 321.35,761.24 322.35,759.72 323.36,760.29 324.37,763.32 325.37,766.36 326.38,766.96 327.39,765.49 328.39,762.51 329.40,758.75 330.41,754.99 331.41,752.04 332.42,750.61 333.43,751.28 334.43,754.39 335.44,757.52 336.45,758.21 337.45,756.82 338.46,753.93 339.47,750.25 340.47,746.59 341.48,743.72 342.49,742.37 343.49,743.12 344.50,746.32 345.51,749.52 346.51,750.29 347.52,748.98 348.53,746.17 349.53,742.57 350.54,738.98 351.55,736.19 352.55,734.92 353.56,735.74 354.57,739.01 355.57,742.29 356.58,743.13 357.59,741.89 358.59,739.15 359.60,735.62 360.61,732.10 361.61,729.37 362.62,728.17 363.63,729.06 364.63,732.40 365.64,735.74 366.65,736.65 367.65,735.48 368.66,732.80 369.67,729.33 370.67,725.87 371.68,723.21 372.69,722.07 373.69,723.01 374.70,726.41 375.71,729.82 376.71,730.78 377.72,729.67 378.73,727.05 379.73,723.64 380.74,720.23 381.75,717.63 382.75,716.54 383.76,717.55 384.77,721.00 385.77,724.46 386.78,725.48 387.79,724.42 388.79,721.85 389.80,718.49 390.81,715.14 391.81,712.58 392.82,711.55 393.83,712.60 394.83,716.10 395.84,719.61 396.85,720.67 397.85,719.66 398.86,717.14 399.87,713.83 400.87,710.52 401.88,708.01 402.89,707.02 403.89,708.12 404.90,711.67 405.91,715.22 406.91,716.33 407.92,715.36 408.93,712.88 409.93,709.61 410.94,706.35 411.95,703.88 412.95,702.93 413.96,704.07 414.97,707.66 415.97,711.25 416.98,712.40 417.99,711.47 418.99,709.03 420.00,705.80 421.01,702.57 422.01,700.14 423.02,699.23 424.03,700.40 425.03,704.03 426.04,707.66 427.05,708.84 428.05,707.95 429.06,705.54 430.07,702.35 431.07,699.15 432.08,696.76 433.09,695.88 434.09,697.09 435.10,700.74 436.11,704.41 437.11,705.62 438.12,704.76 439.13,702.39 440.13,699.22 441.14,696.06 442.15,693.70 443.15,692.85 444.16,694.09 445.17,697.77 446.17,701.46 447.18,702.71 448.19,701.88 449.19,699.53 450.20,696.40 451.21,693.26 452.21,690.93 453.22,690.11 454.23,691.37 455.23,695.09 456.24,698.80 457.25,700.07 458.25,699.27 459.26,696.95 460.27,693.84 461.27,690.73 462.28,688.42 463.29,687.62 464.29,688.91 465.30,692.65 466.31,696.39 467.31,697.69 468.32,696.91 469.33,694.61 470.33,691.52 471.34,688.44 472.35,686.15 473.35,685.38 474.36,686.69 475.37,690.45 476.37,694.21 477.38,695.53 478.39,694.77 479.39,692.50 480.40,689.43 481.41,686.37 482.41,684.10 483.42,683.35 484.43,684.68 485.43,688.46 486.44,692.24 487.45,693.58 488.45,692.84 489.46,690.58 490.47,687.54 491.47,684.49 492.48,682.24 493.49,681.51 494.49,682.86 495.50,686.66 496.51,690.46 497.51,691.81 498.52,691.09 499.53,688.85 500.53,685.82 501.54,682.79 502.55,680.56 503.55,679.84 504.56,681.21 505.57,685.03 506.57,688.84 507.58,690.22 508.59,689.51 509.59,687.29 510.60,684.27 511.61,681.26 512.61,679.04 513.62,678.34 514.63,679.72 515.63,683.55 516.64,687.38 517.65,688.77 518.65,688.07 519.66,685.87 520.67,682.87 521.67,679.87 522.68,677.67 523.69,676.98 524.69,678.37 525.70,682.22 526.71,686.06 527.71,687.46 528.72,686.78 529.73,684.58 530.73,681.60 531.74,678.61 532.75,676.42 533.75,675.74 534.76,677.15 535.77,681.01 536.77,684.87 537.78,686.28 538.79,685.61 539.79,683.42 540.80,680.45 541.81,677.47 542.81,675.29 543.82,674.63 544.83,676.05 545.83,679.92 546.84,683.78 547.85,685.20 548.85,684.55 549.86,682.37 550.87,679.41 551.87,676.44 552.88,674.28 553.89,673.62 554.89,675.05 555.90,678.93 556.91,682.80 557.91,684.24 558.92,683.59 559.93,681.42 560.93,678.47 561.94,675.51 562.95,673.35 563.95,672.71 564.96,674.15 565.97,678.03 566.97,681.92 567.98,683.36 568.99,682.72 569.99,680.56 571.00,677.62 572.01,674.67 573.01,672.52 574.02,671.88 575.03,673.33 576.03,677.22 577.04,681.12 578.05,682.56 579.05,681.93 580.06,679.79 581.07,676.85 582.07,673.91 583.08,671.76 584.09,671.13 585.09,672.59 586.10,676.49 587.11,680.39 588.11,681.85 589.12,681.22 590.13,679.08 591.13,676.15 592.14,673.22 593.15,671.08 594.15,670.46 595.16,671.92 596.17,675.83 597.17,679.73 598.18,681.20 599.19,680.58 600.19,678.45 601.20,675.52 602.21,672.59 603.21,670.46 604.22,669.85 605.23,671.31 606.23,675.23 607.24,679.14 608.25,680.61 609.25,679.99 610.26,677.87 611.27,674.95 612.27,672.03 613.28,669.90 614.29,669.29 615.29,670.76 616.30,674.68 617.31,678.60 618.31,680.08 619.32,679.47 620.33,677.35 621.33,674.43 622.34,671.52 623.35,669.40 624.35,668.79 625.36,670.27 626.37,674.19 627.37,678.12 628.38,679.60 629.39,678.99 630.39,676.88 631.40,673.96 632.41,671.05 633.41,668.94 634.42,668.34 635.43,669.82 636.43,673.75 637.44,677.68 638.45,679.16 639.45,678.56 640.46,676.45 641.47,673.54 642.47,670.64 643.48,668.52 644.49,667.93 645.49,669.41 646.50,673.35 647.51,678.95 648.51,684.51 649.52,690.00 650.53,695.45 651.53,700.83 652.54,706.17 653.55,711.45 654.55,716.68 655.56,721.86 656.57,726.98 657.57,732.06 658.58,737.08 659.59,742.05 660.59,746.98 661.60,751.85 662.61,756.68 663.61,761.46 664.62,766.19 665.63,770.87 666.63,775.51 667.64,780.10 668.65,784.65 669.65,789.15 670.66,793.61 671.67,798.02 672.67,802.39 673.68,806.71 674.69,810.99 675.69,815.23 676.70,819.43 677.71,823.58 678.71,827.69 679.72,831.77 680.73,835.80 681.73,839.79 682.74,843.74 683.75,847.65 684.75,851.53 685.76,855.36 686.77,859.16 687.77,862.92 688.78,866.64 689.79,870.33 690.79,873.97 691.80,877.59 692.81,881.16 693.81,884.70 694.82,888.21 695.83,891.68 696.83,895.11 697.84,898.51 698.85,901.88 699.85,905.22 700.86,908.52 701.87,911.79 702.87,915.02 703.88,918.22 704.89,921.40 705.89,924.54 706.90,927.64 707.91,930.72 708.91,933.77 709.92,936.79 710.93,939.77 711.93,942.73 712.94,945.66 713.95,948.56 714.95,951.43 715.96,954.27 716.97,957.08 717.97,959.87 718.98,962.62 719.99,965.35 720.99,968.05 722.00,970.73 723.01,973.38 724.01,976.00 725.02,978.60 726.03,981.17 727.03,983.71 728.04,986.23 729.05,988.73 730.05,991.20 731.06,993.64 732.07,996.07 733.07,998.46 734.08,1000.84 735.09,1003.19 736.09,1005.51 737.10,1007.81 738.11,1010.09 739.11,1012.35 740.12,1014.59 741.13,1016.80 742.13,1018.99 743.14,1021.16 744.15,1023.31 745.15,1025.43 746.16,1027.54 747.17,1029.62 748.17,1031.68 749.18,1033.73 750.19,1035.75 751.19,1037.75 752.20,1039.73 753.21,1041.70 754.21,1043.64 755.22,1045.56 756.23,1047.47 757.23,1049.35 758.24,1051.22 759.25,1053.07 760.25,1054.90 761.26,1056.71 762.27,1058.50 763.27,1060.28 764.28,1062.04 765.29,1063.78 766.29,1065.50 767.30,1067.21 768.31,1068.90 769.31,1070.57 770.32,1072.22 771.33,1073.86 772.33,1075.49 773.34,1077.09 774.35,1078.68 775.35,1080.26 776.36,1081.82 777.37,1083.36 778.37,1084.89 779.38,1086.40 780.39,1087.90 781.39,1089.38 782.40,1090.85 783.41,1092.31 784.41,1093.75 785.42,1095.17 786.43,1096.58 787.43,1097.98 788.44,1099.36 789.45,1100.73 790.45,1102.09 791.46,1103.43 792.47,1104.76 793.47,1106.07 794.48,1107.37 795.49,1108.66 796.49,1109.94 797.50,1111.20 798.51,1112.46 799.51,1113.70 800.52,1114.92 801.53,1116.14 802.53,1117.34 803.54,1118.53 804.55,1119.71 805.55,1120.87 806.56,1122.03 807.57,1123.17 808.57,1124.30 809.58,1125.43 810.59,1126.54 811.59,1127.63 812.60,1128.72 813.61,1129.80 814.61,1130.87 815.62,1131.92 816.63,1132.97 817.63,1134.00 818.64,1135.03 819.65,1136.04 820.65,1137.04 821.66,1138.04 822.67,1139.02 823.67,1140.00 824.68,1140.96 825.69,1141.92 826.69,1142.86 827.70,1143.80 828.71,1144.73 829.71,1145.64 830.72,1146.55 831.73,1147.45 832.73,1148.34 833.74,1149.23 834.75,1150.10 835.75,1150.96 836.76,1151.82 837.77,1152.67 838.77,1153.50 839.78,1154.33 840.79,1155.16 841.79,1155.97 842.80,1156.78 843.81,1157.57 844.81,1158.36 845.82,1159.15 846.83,1159.92 847.83,1160.69 848.84,1161.45 849.85,1162.20 850.85,1162.94 851.86,1163.68 852.87,1164.41 853.87,1165.13 854.88,1165.84 855.89,1166.55 856.89,1167.25 857.90,1167.95 858.91,1168.63 859.91,1169.31 860.92,1169.99 861.93,1170.65 862.93,1171.31 863.94,1171.97 864.95,1172.61 865.95,1173.25 866.96,1173.89 867.97,1174.51 868.97,1175.14 869.98,1175.75 870.99,1176.36 871.99,1176.96 873.00,1177.56 874.01,1178.15 875.01,1178.74 876.02,1179.32 877.03,1179.89 878.03,1180.46 879.04,1181.02 880.05,1181.58 881.05,1182.13 882.06,1182.67 883.07,1183.21 884.07,1183.75 885.08,1184.28 886.09,1184.80 887.09,1185.32 888.10,1185.84 889.11,1186.34 890.11,1186.85 891.12,1187.35 892.13,1187.84 893.13,1188.33 894.14,1188.81 895.15,1189.29 896.15,1189.77 897.16,1190.24 898.17,1190.70 899.17,1191.16 900.18,1191.62 901.19,1192.07 902.19,1192.51 903.20,1192.96 904.21,1193.40 905.21,1193.83 906.22,1194.26 907.23,1194.68 908.23,1195.10 909.24,1195.52 910.25,1195.93 911.25,1196.34 912.26,1196.74 913.27,1197.15 914.27,1197.54 915.28,1197.93 916.29,1198.32 917.29,1198.71 918.30,1199.09 919.31,1199.46 920.31,1199.84 921.32,1200.21 922.33,1200.57 923.33,1200.93 924.34,1201.29 925.35,1201.65 926.35,1202.00 927.36,1202.35 928.37,1202.69 929.37,1203.03 930.38,1203.37 931.39,1203.70 932.39,1204.04 933.40,1204.36 934.41,1204.69 935.41,1205.01 936.42,1205.33 937.43,1205.64 938.43,1205.95 939.44,1206.26 940.45,1206.57 941.45,1206.87 942.46,1207.17 943.47,1207.47 944.47,1207.76 945.48,1208.05 946.49,1208.34 947.49,1208.62 948.50,1208.90 949.51,1209.18 950.51,1209.46 951.52,1209.73 952.53,1210.00 953.53,1210.27 954.54,1210.54 955.55,1210.80 956.55,1211.06 957.56,1211.32 958.57,1211.57 959.57,1211.83 960.58,1212.08 961.59,1212.33 962.59,1212.57 963.60,1212.81 964.61,1213.05 965.61,1213.29 966.62,1213.53 967.63,1213.76 968.63,1213.99 969.64,1214.22 970.65,1214.45 971.65,1214.67 972.66,1214.89 973.67,1215.11 974.67,1215.33 975.68,1215.54 976.69,1215.76 977.69,1215.97 978.70,1216.18 979.71,1216.38 980.71,1216.59 981.72,1216.79 982.73,1216.99 983.73,1217.19 984.74,1217.39 985.75,1217.58 986.75,1217.78 987.76,1217.97 988.77,1218.16 989.77,1218.34 990.78,1218.53 991.79,1218.71 992.79,1218.89 993.80,1219.07 994.81,1219.25 995.81,1219.43 996.82,1219.60 997.83,1219.77 998.83,1219.95 999.84,1220.12 1000.85,1220.28 1001.85,1220.45 1002.86,1220.61 1003.87,1220.78 1004.87,1220.94 1005.88,1221.10 1006.89,1221.25 1007.89,1221.41 1008.90,1221.57 1009.91,1221.72 1010.91,1221.87 1011.92,1222.02 1012.93,1222.17 1013.93,1222.32 1014.94,1222.46 1015.95,1222.61 1016.95,1222.75 1017.96,1222.89 1018.97,1223.03 1019.97,1223.17 1020.98,1223.31 1021.99,1223.44 1022.99,1223.58 1024.00,1223.71 1025.01,1223.84 1026.01,1223.97 1027.02,1224.10 1028.03,1224.23 1029.03,1224.36 1030.04,1224.48 1031.05,1224.61 1032.05,1224.73 1033.06,1224.85 1034.07,1224.97 1035.07,1225.09 1036.08,1225.21 1037.09,1225.33 1038.09,1225.44 1039.10,1225.56 1040.11,1225.67 1041.11,1225.78 1042.12,1225.89 1043.13,1226.00 1044.13,1226.11 1045.14,1226.22 1046.15,1226.33 1047.15,1226.43 1048.16,1226.54 1049.17,1226.64 1050.17,1226.75 1051.18,1226.85 1052.19,1226.95 1053.19,1227.05 1054.20,1227.15 1055.21,1227.24 1056.21,1227.34 1057.22,1227.44 1058.23,1227.53 1059.23,1227.62 1060.24,1227.72 1061.25,1227.81 1062.25,1227.90 1063.26,1227.99 1064.27,1228.08 1065.27,1228.17 1066.28,1228.26 1067.29,1228.34 1068.29,1228.43 1069.30,1228.51 1070.31,1228.60 1071.31,1228.68 1072.32,1228.76 1073.33,1228.85 1074.33,1228.93 1075.34,1229.01 1076.35,1229.09 1077.35,1229.16 1078.36,1229.24 1079.37,1229.32 1080.37,1229.39 1081.38,1229.47 1082.39,1229.54 1083.39,1229.62 1084.40,1229.69 1085.41,1229.76 1086.41,1229.84 1087.42,1229.91 1088.43,1229.98 1089.43,1230.05 1090.44,1230.11 1091.45,1230.18 1092.45,1230.25 1093.46,1230.32 1094.47,1230.38 1095.47,1230.45 1096.48,1230.51 1097.49,1230.58 1098.49,1230.64 1099.50,1230.70 1100.51,1230.77 1101.51,1230.83 1102.52,1230.89 1103.53,1230.95 1104.53,1231.01 1105.54,1231.07 1106.55,1231.13 1107.55,1231.19 1108.56,1231.24 1109.57,1231.30 1110.57,1231.36 1111.58,1231.41 1112.59,1231.47 1113.59,1231.52 1114.60,1231.58 1115.61,1231.63 1116.61,1231.68 1117.62,1231.74 1118.63,1231.79 1119.63,1231.84 1120.64,1231.89 1121.65,1231.94 1122.65,1231.99 1123.66,1232.04 1124.67,1232.09 1125.67,1232.14 1126.68,1232.19 1127.69,1232.23 1128.69,1232.28 1129.70,1232.33 1130.71,1232.37 1131.71,1232.42 1132.72,1232.46 1133.73,1232.51 1134.73,1232.55 1135.74,1232.60 1136.75,1232.64 1137.75,1232.68 1138.76,1232.73 1139.77,1232.77 1140.77,1232.81 1141.78,1232.85 1142.79,1232.89 1143.79,1232.93 1144.80,1232.97 1145.81,1233.01 1146.81,1233.05 1147.82,1233.09 1148.83,1233.13 1149.83,1233.17 1150.84,1233.21 1151.85,1233.24 1152.85,1233.28 1153.86,1233.32 1154.87,1233.35 1155.87,1233.39 1156.88,1233.42 1157.89,1233.46 1158.89,1233.49 1159.90,1233.53 1160.91,1233.56 1161.91,1233.60 1162.92,1233.63 1163.93,1233.66 1164.93,1233.70 1165.94,1233.73 1166.95,1233.76 1167.95,1233.79 1168.96,1233.83 1169.97,1233.86 1170.97,1233.89 1171.98,1233.92 1172.99,1233.95 1173.99,1233.98 1175.00,1234.01 1176.01,1234.04 1177.01,1234.07 1178.02,1234.10 1179.03,1234.12 1180.03,1234.15 1181.04,1234.18 1182.05,1234.21 1183.05,1234.24 1184.06,1234.26 1185.07,1234.29 1186.07,1234.32 1187.08,1234.34 1188.09,1234.37 1189.09,1234.39 1190.10,1234.42 1191.11,1234.45 1192.11,1234.47 1193.12,1234.50 1194.13,1234.52 1195.13,1234.54 1196.14,1234.57 1197.15,1234.59 1198.15,1234.62 1199.16,1234.64 1200.17,1234.66 1201.17,1234.69 1202.18,1234.71 1203.19,1234.73 1204.19,1234.75 1205.20,1234.77 1206.21,1234.80 1207.21,1234.82 1208.22,1234.84 1209.23,1234.86 1210.23,1234.88 1211.24,1234.90 1212.25,1234.92 1213.25,1234.94 1214.26,1234.96 1215.27,1234.98 1216.27,1235.00 1217.28,1235.02 1218.29,1235.04 1219.29,1235.06 1220.30,1235.08 1221.31,1235.10 1222.31,1235.12 1223.32,1235.14 1224.33,1235.15 1225.33,1235.17 1226.34,1235.19 1227.35,1235.21 1228.35,1235.22 1229.36,1235.24 1230.37,1235.26 1231.37,1235.28 1232.38,1235.29 1233.39,1235.31 1234.39,1235.33 1235.40,1235.34 1236.41,1235.36 1237.41,1235.37 1238.42,1235.39 1239.43,1235.41 1240.43,1235.42 1241.44,1235.44 1242.45,1235.45 1243.45,1235.47 1244.46,1235.48 1245.47,1235.50 1246.47,1235.51 1247.48,1235.53 1248.49,1235.54 1249.49,1235.55 1250.50,1235.57" fill="none" stroke="#00ff00" stroke-width="1" clip-path="url(#cpb)" shape-rendering="crispEdges"/>
<polyline points="42.50,1236.97 43.51,1236.97 44.51,1236.97 45.52,1236.97 46.53,1236.97 47.53,1236.97 48.54,1236.97 49.55,1236.97 50.55,1236.97 51.56,1236.97 52.57,1236.97 53.57,1236.97 54.58,1236.97 55.59,1236.97 56.59,1236.97 57.60,1236.97 58.61,1236.97 59.61,1236.97 60.62,1236.97 61.63,1236.97 62.63,1236.97 63.64,1236.97 64.65,1236.97 65.65,1236.97 66.66,1236.97 67.67,1236.97 68.67,1236.97 69.68,1236.97 70.69,1236.97 71.69,1236.97 72.70,1236.97 73.71,1236.97 74.71,1236.97 75.72,1236.97 76.73,1236.97 77.73,1236.97 78.74,1236.97 79.75,1236.97 80.75,1236.97 81.76,1236.97 82.77,1236.97 83.77,1236.97 84.78,1236.97 85.79,1236.97 86.79,1236.97 87.80,1236.97 88.81,1236.97 89.81,1236.97 90.82,1236.97 91.83,1236.97 92.83,1236.97 93.84,1236.97 94.85,1236.97 95.85,1236.97 96.86,1236.97 97.87,1236.97 98.87,1236.97 99.88,1236.97 100.89,1236.97 101.89,1236.97 102.90,1236.97 103.91,1236.97 104.91,1236.97 105.92,1236.97 106.93,1236.97 107.93,1236.97 108.94,1236.97 109.95,1236.97 110.95,1236.97 111.96,1236.97 112.97,1236.97 113.97,1236.97 114.98,1236.97 115.99,1236.97 116.99,1236.97 118.00,1236.97 119.01,1236.97 120.01,1236.97 121.02,1236.97 122.03,1236.97 123.03,1236.97 124.04,1236.97 125.05,1236.97 126.05,1236.97 127.06,1236.97 128.07,1236.97 129.07,1236.97 130.08,1236.97 131.09,1236.97 132.09,1236.97 133.10,1236.97 134.11,1236.97 135.11,1236.97 136.12,1236.97 137.13,1236.97 138.13,1236.97 139.14,1236.97 140.15,1236.97 141.15,1236.97 142.16,1236.97 143.17,1236.97 144.17,1236.55 145.18,1235.31 146.19,1233.30 147.19,1230.56 148.20,1227.13 149.21,1223.09 150.21,1218.50 151.22,1213.43 152.23,1207.96 153.23,1202.17 154.24,1196.02 155.25,1189.46 156.25,1182.50 157.26,1175.19 158.27,1167.58 159.27,1159.73 160.28,1151.72 161.29,1143.62 162.29,1135.52 163.30,1127.49 164.31,1119.39 165.31,1111.05 166.32,1102.49 167.33,1093.76 168.33,1084.92 169.34,1076.05 170.35,1067.23 171.35,1058.57 172.36,1050.14 173.37,1042.03 174.37,1033.99 175.38,1025.76 176.39,1017.36 177.39,1008.85 178.40,1000.31 179.41,991.84 180.41,983.55 181.42,975.54 182.43,967.92 183.43,960.77 184.44,953.76 185.45,946.52 186.45,939.10 187.46,931.57 188.47,924.01 189.47,916.57 190.48,909.36 191.49,902.52 192.49,896.16 193.50,890.38 194.51,884.74 195.51,878.80 196.52,872.63 197.53,866.32 198.53,859.99 199.54,853.80 200.55,847.88 201.55,842.35 202.56,837.31 203.57,832.84 204.57,828.48 205.58,823.82 206.59,818.92 207.59,813.87 208.60,808.79 209.61,803.83 210.61,799.13 211.62,794.81 212.63,790.97 213.63,787.68 214.64,784.49 215.65,780.97 216.65,777.19 217.66,773.25 218.67,769.27 219.67,765.38 220.68,761.74 221.69,758.45 222.69,755.63 223.70,753.33 224.71,751.11 225.71,748.56 226.72,745.72 227.73,742.69 228.73,739.61 229.74,736.60 230.75,733.81 231.75,731.37 232.76,729.36 233.77,727.86 234.77,726.43 235.78,724.64 236.79,722.54 237.79,720.24 238.80,717.87 239.81,715.55 240.81,713.44 241.82,711.65 242.83,710.28 243.83,709.40 244.84,708.57 245.85,707.37 246.85,705.84 247.86,704.10 248.87,702.26 249.87,700.47 250.88,698.87 251.89,697.58 252.89,696.69 253.90,696.28 254.91,695.90 255.91,695.14 256.92,694.04 257.93,692.71 258.93,691.28 259.94,689.88 260.95,688.65 261.95,687.72 262.96,687.19 263.97,687.12 264.97,687.08 265.98,686.64 266.99,685.85 267.99,684.83 269.00,683.69 270.01,682.57 271.01,681.61 272.02,680.95 273.03,680.68 274.03,680.85 275.04,681.05 276.05,680.84 277.05,680.28 278.06,679.47 279.07,678.53 280.07,677.62 281.08,676.86 282.09,676.38 283.09,676.29 284.10,676.64 285.11,677.01 286.11,676.95 287.12,676.55 288.13,675.89 289.13,675.10 290.14,674.33 291.15,673.70 292.15,673.36 293.16,673.39 294.17,673.86 295.17,674.34 296.18,674.40 297.19,674.11 298.19,673.55 299.20,672.86 300.21,672.18 301.21,671.65 302.22,671.39 303.23,671.51 304.23,672.07 305.24,672.63 306.25,672.77 307.25,672.54 308.26,672.06 309.27,671.43 310.27,670.82 311.28,670.35 312.29,670.15 313.29,670.33 314.30,670.94 315.31,671.55 316.31,671.74 317.32,671.56 318.33,671.12 319.33,670.55 320.34,669.98 321.35,669.55 322.35,669.39 323.36,669.60 324.37,670.25 325.37,670.90 326.38,671.12 327.39,670.97 328.39,670.56 329.40,670.01 330.41,669.47 331.41,669.07 332.42,668.93 333.43,669.17 334.43,669.84 335.44,670.51 336.45,670.75 337.45,670.63 338.46,670.24 339.47,669.71 340.47,669.18 341.48,668.79 342.49,668.68 343.49,668.93 344.50,669.61 345.51,670.30 346.51,670.55 347.52,670.44 348.53,670.06 349.53,669.54 350.54,669.02 351.55,668.65 352.55,668.54 353.56,668.80 354.57,669.49 355.57,670.19 356.58,670.45 357.59,670.34 358.59,669.97 359.60,669.46 360.61,668.95 361.61,668.58 362.62,668.48 363.63,668.74 364.63,669.44 365.64,670.14 366.65,670.40 367.65,670.30 368.66,669.94 369.67,669.43 370.67,668.92 371.68,668.55 372.69,668.46 373.69,668.72 374.70,669.42 375.71,670.12 376.71,670.39 377.72,670.29 378.73,669.93 379.73,669.42 380.74,668.92 381.75,668.55 382.75,668.46 383.76,668.73 384.77,669.43 385.77,670.13 386.78,670.40 387.79,670.30 388.79,669.94 389.80,669.43 390.81,668.93 391.81,668.56 392.82,668.47 393.83,668.74 394.83,669.44 395.84,670.14 396.85,670.41 397.85,670.31 398.86,669.95 399.87,669.45 400.87,668.94 401.88,668.58 402.89,668.48 403.89,668.75 404.90,669.45 405.91,670.16 406.91,670.43 407.92,670.33 408.93,669.97 409.93,669.46 410.94,668.96 411.95,668.59 412.95,668.50 413.96,668.77 414.97,669.47 415.97,670.17 416.98,670.44 417.99,670.34 418.99,669.98 420.00,669.47 421.01,668.97 422.01,668.61 423.02,668.51 424.03,668.78 425.03,669.48 426.04,670.18 427.05,670.45 428.05,670.36 429.06,669.99 430.07,669.49 431.07,668.98 432.08,668.62 433.09,668.52 434.09,668.79 435.10,669.49 436.11,670.19 437.11,670.46 438.12,670.37 439.13,670.00 440.13,669.50 441.14,668.99 442.15,668.63 443.15,668.53 444.16,668.80 445.17,669.50 446.17,670.20 447.18,670.47 448.19,670.37 449.19,670.01 450.20,669.50 451.21,669.00 452.21,668.63 453.22,668.54 454.23,668.80 455.23,669.51 456.24,670.21 457.25,670.48 458.25,670.38 459.26,670.01 460.27,669.51 461.27,669.00 462.28,668.64 463.29,668.54 464.29,668.81 465.30,669.51 466.31,670.21 467.31,670.48 468.32,670.38 469.33,670.02 470.33,669.51 471.34,669.01 472.35,668.64 473.35,668.54 474.36,668.81 475.37,669.51 476.37,670.22 477.38,670.48 478.39,670.39 479.39,670.02 480.40,669.52 481.41,669.01 482.41,668.65 483.42,668.55 484.43,668.82 485.43,669.52 486.44,670.22 487.45,670.49 488.45,670.39 489.46,670.02 490.47,669.52 491.47,669.01 492.48,668.65 493.49,668.55 494.49,668.82 495.50,669.52 496.51,670.22 497.51,670.49 498.52,670.39 499.53,670.03 500.53,669.52 501.54,669.01 502.55,668.65 503.55,668.55 504.56,668.82 505.57,669.52 506.57,670.22 507.58,670.49 508.59,670.39 509.59,670.03 510.60,669.52 511.61,669.01 512.61,668.65 513.62,668.55 514.63,668.82 515.63,669.52 516.64,670.22 517.65,670.49 518.65,670.39 519.66,670.03 520.67,669.52 521.67,669.02 522.68,668.65 523.69,668.55 524.69,668.82 525.70,669.52 526.71,670.22 527.71,670.49 528.72,670.39 529.73,670.03 530.73,669.52 531.74,669.02 532.75,668.65 533.75,668.55 534.76,668.82 535.77,669.52 536.77,670.22 537.78,670.49 538.79,670.39 539.79,670.03 540.80,669.52 541.81,669.02 542.81,668.65 543.82,668.55 544.83,668.82 545.83,669.52 546.84,670.22 547.85,670.49 548.85,670.39 549.86,670.03 550.87,669.52 551.87,669.02 552.88,668.65 553.89,668.55 554.89,668.82 555.90,669.52 556.91,670.22 557.91,670.49 558.92,670.39 559.93,670.03 560.93,669.52 561.94,669.02 562.95,668.65 563.95,668.55 564.96,668.82 565.97,669.52 566.97,670.22 567.98,670.49 568.99,670.39 569.99,670.03 571.00,669.52 572.01,669.02 573.01,668.65 574.02,668.55 575.03,668.82 576.03,669.52 577.04,670.22 578.05,670.49 579.05,670.39 580.06,670.03 581.07,669.52 582.07,669.02 583.08,668.65 584.09,668.55 585.09,668.82 586.10,669.52 587.11,670.22 588.11,670.49 589.12,670.39 590.13,670.03 591.13,669.52 592.14,669.02 593.15,668.65 594.15,668.55 595.16,668.82 596.17,669.52 597.17,670.22 598.18,670.49 599.19,670.39 600.19,670.03 601.20,669.52 602.21,669.02 603.21,668.65 604.22,668.55 605.23,668.82 606.23,669.52 607.24,670.22 608.25,670.49 609.25,670.39 610.26,670.03 611.27,669.52 612.27,669.02 613.28,668.65 614.29,668.55 615.29,668.82 616.30,669.52 617.31,670.22 618.31,670.49 619.32,670.39 620.33,670.03 621.33,669.52 622.34,669.02 623.35,668.65 624.35,668.55 625.36,668.82 626.37,669.52 627.37,670.22 628.38,670.49 629.39,670.39 630.39,670.03 631.40,669.52 632.41,669.02 633.41,668.65 634.42,668.55 635.43,668.82 636.43,669.52 637.44,670.22 638.45,670.49 639.45,670.39 640.46,670.03 641.47,669.52 642.47,669.02 643.48,668.65 644.49,668.55 645.49,668.82 646.50,669.52 647.51,669.84 648.51,670.75 649.52,672.22 650.53,674.21 651.53,676.69 652.54,679.61 653.55,682.96 654.55,686.69 655.56,690.79 656.57,695.21 657.57,699.93 658.58,704.94 659.59,710.20 660.59,715.69 661.60,721.40 662.61,727.30 663.61,733.37 664.62,739.59 665.63,745.96 666.63,752.44 667.64,759.04 668.65,765.73 669.65,772.49 670.66,779.33 671.67,786.22 672.67,793.15 673.68,800.12 674.69,807.11 675.69,814.12 676.70,821.13 677.71,828.15 678.71,835.15 679.72,842.13 680.73,849.10 681.73,856.03 682.74,862.93 683.75,869.79 684.75,876.60 685.76,883.37 686.77,890.08 687.77,896.73 688.78,903.32 689.79,909.85 690.79,916.31 691.80,922.71 692.81,929.02 693.81,935.27 694.82,941.44 695.83,947.53 696.83,953.54 697.84,959.47 698.85,965.31 699.85,971.08 700.86,976.76 701.87,982.35 702.87,987.86 703.88,993.28 704.89,998.62 705.89,1003.87 706.90,1009.03 707.91,1014.10 708.91,1019.09 709.92,1024.00 710.93,1028.81 711.93,1033.54 712.94,1038.19 713.95,1042.75 714.95,1047.23 715.96,1051.62 716.97,1055.93 717.97,1060.16 718.98,1064.30 719.99,1068.37 720.99,1072.35 722.00,1076.26 723.01,1080.08 724.01,1083.83 725.02,1087.50 726.03,1091.10 727.03,1094.62 728.04,1098.07 729.05,1101.45 730.05,1104.76 731.06,1107.99 732.07,1111.16 733.07,1114.25 734.08,1117.28 735.09,1120.25 736.09,1123.14 737.10,1125.98 738.11,1128.75 739.11,1131.46 740.12,1134.11 741.13,1136.70 742.13,1139.22 743.14,1141.70 744.15,1144.11 745.15,1146.47 746.16,1148.78 747.17,1151.03 748.17,1153.23 749.18,1155.38 750.19,1157.47 751.19,1159.52 752.20,1161.52 753.21,1163.47 754.21,1165.38 755.22,1167.24 756.23,1169.05 757.23,1170.82 758.24,1172.55 759.25,1174.23 760.25,1175.88 761.26,1177.48 762.27,1179.05 763.27,1180.58 764.28,1182.07 765.29,1183.52 766.29,1184.93 767.30,1186.31 768.31,1187.66 769.31,1188.97 770.32,1190.25 771.33,1191.50 772.33,1192.72 773.34,1193.90 774.35,1195.06 775.35,1196.19 776.36,1197.28 777.37,1198.35 778.37,1199.39 779.38,1200.41 780.39,1201.40 781.39,1202.36 782.40,1203.30 783.41,1204.22 784.41,1205.11 785.42,1205.98 786.43,1206.82 787.43,1207.64 788.44,1208.45 789.45,1209.23 790.45,1209.99 791.46,1210.73 792.47,1211.45 793.47,1212.15 794.48,1212.83 795.49,1213.50 796.49,1214.15 797.50,1214.78 798.51,1215.39 799.51,1215.99 800.52,1216.57 801.53,1217.14 802.53,1217.69 803.54,1218.22 804.55,1218.75 805.55,1219.25 806.56,1219.75 807.57,1220.23 808.57,1220.70 809.58,1221.15 810.59,1221.59 811.59,1222.02 812.60,1222.44 813.61,1222.85 814.61,1223.25 815.62,1223.63 816.63,1224.01 817.63,1224.37 818.64,1224.73 819.65,1225.07 820.65,1225.41 821.66,1225.74 822.67,1226.05 823.67,1226.36 824.68,1226.66 825.69,1226.96 826.69,1227.24 827.70,1227.52 828.71,1227.79 829.71,1228.05 830.72,1228.30 831.73,1228.55 832.73,1228.79 833.74,1229.02 834.75,1229.25 835.75,1229.47 836.76,1229.68 837.77,1229.89 838.77,1230.09 839.78,1230.29 840.79,1230.48 841.79,1230.67 842.80,1230.85 843.81,1231.03 844.81,1231.20 845.82,1231.36 846.83,1231.52 847.83,1231.68 848.84,1231.83 849.85,1231.98 850.85,1232.12 851.86,1232.26 852.87,1232.40 853.87,1232.53 854.88,1232.66 855.89,1232.79 856.89,1232.91 857.90,1233.02 858.91,1233.14 859.91,1233.25 860.92,1233.36 861.93,1233.46 862.93,1233.56 863.94,1233.66 864.95,1233.76 865.95,1233.85 866.96,1233.94 867.97,1234.03 868.97,1234.12 869.98,1234.20 870.99,1234.28 871.99,1234.36 873.00,1234.44 874.01,1234.51 875.01,1234.58 876.02,1234.65 877.03,1234.72 878.03,1234.78 879.04,1234.85 880.05,1234.91 881.05,1234.97 882.06,1235.03 883.07,1235.09 884.07,1235.14 885.08,1235.20 886.09,1235.25 887.09,1235.30 888.10,1235.35 889.11,1235.39 890.11,1235.44 891.12,1235.49 892.13,1235.53 893.13,1235.57 894.14,1235.61 895.15,1235.65 896.15,1235.69 897.16,1235.73 898.17,1235.77 899.17,1235.80 900.18,1235.84 901.19,1235.87 902.19,1235.90 903.20,1235.93 904.21,1235.96 905.21,1235.99 906.22,1236.02 907.23,1236.05 908.23,1236.08 909.24,1236.10 910.25,1236.13 911.25,1236.15 912.26,1236.18 913.27,1236.20 914.27,1236.22 915.28,1236.25 916.29,1236.27 917.29,1236.29 918.30,1236.31 919.31,1236.33 920.31,1236.35 921.32,1236.37 922.33,1236.38 923.33,1236.40 924.34,1236.42 925.35,1236.43 926.35,1236.45 927.36,1236.47 928.37,1236.48 929.37,1236.50 930.38,1236.51 931.39,1236.52 932.39,1236.54 933.40,1236.55 934.41,1236.56 935.41,1236.57 936.42,1236.59 937.43,1236.60 938.43,1236.61 939.44,1236.62 940.45,1236.63 941.45,1236.64 942.46,1236.65 943.47,1236.66 944.47,1236.67 945.48,1236.68 946.49,1236.69 947.49,1236.69 948.50,1236.70 949.51,1236.71 950.51,1236.72 951.52,1236.73 952.53,1236.73 953.53,1236.74 954.54,1236.75 955.55,1236.75 956.55,1236.76 957.56,1236.77 958.57,1236.77 959.57,1236.78 960.58,1236.78 961.59,1236.79 962.59,1236.79 963.60,1236.80 964.61,1236.80 965.61,1236.81 966.62,1236.81 967.63,1236.82 968.63,1236.82 969.64,1236.83 970.65,1236.83 971.65,1236.84 972.66,1236.84 973.67,1236.84 974.67,1236.85 975.68,1236.85 976.69,1236.85 977.69,1236.86 978.70,1236.86 979.71,1236.86 980.71,1236.87 981.72,1236.87 982.73,1236.87 983.73,1236.88 984.74,1236.88 985.75,1236.88 986.75,1236.88 987.76,1236.89 988.77,1236.89 989.77,1236.89 990.78,1236.89 991.79,1236.90 992.79,1236.90 993.80,1236.90 994.81,1236.90 995.81,1236.90 996.82,1236.91 997.83,1236.91 998.83,1236.91 999.84,1236.91 1000.85,1236.91 1001.85,1236.91 1002.86,1236.92 1003.87,1236.92 1004.87,1236.92 1005.88,1236.92 1006.89,1236.92 1007.89,1236.92 1008.90,1236.92 1009.91,1236.93 1010.91,1236.93 1011.92,1236.93 1012.93,1236.93 1013.93,1236.93 1014.94,1236.93 1015.95,1236.93 1016.95,1236.93 1017.96,1236.93 1018.97,1236.94 1019.97,1236.94 1020.98,1236.94 1021.99,1236.94 1022.99,1236.94 1024.00,1236.94 1025.01,1236.94 1026.01,1236.94 1027.02,1236.94 1028.03,1236.94 1029.03,1236.94 1030.04,1236.94 1031.05,1236.94 1032.05,1236.95 1033.06,1236.95 1034.07,1236.95 1035.07,1236.95 1036.08,1236.95 1037.09,1236.95 1038.09,1236.95 1039.10,1236.95 1040.11,1236.95 1041.11,1236.95 1042.12,1236.95 1043.13,1236.95 1044.13,1236.95 1045.14,1236.95 1046.15,1236.95 1047.15,1236.95 1048.16,1236.95 1049.17,1236.95 1050.17,1236.95 1051.18,1236.95 1052.19,1236.95 1053.19,1236.96 1054.20,1236.96 1055.21,1236.96 1056.21,1236.96 1057.22,1236.96 1058.23,1236.96 1059.23,1236.96 1060.24,1236.96 1061.25,1236.96 1062.25,1236.96 1063.26,1236.96 1064.27,1236.96 1065.27,1236.96 1066.28,1236.96 1067.29,1236.96 1068.29,1236.96 1069.30,1236.96 1070.31,1236.96 1071.31,1236.96 1072.32,1236.96 1073.33,1236.96 1074.33,1236.96 1075.34,1236.96 1076.35,1236.96 1077.35,1236.96 1078.36,1236.96 1079.37,1236.96 1080.37,1236.96 1081.38,1236.96 1082.39,1236.96 1083.39,1236.96 1084.40,1236.96 1085.41,1236.96 1086.41,1236.96 1087.42,1236.96 1088.43,1236.96 1089.43,1236.96 1090.44,1236.96 1091.45,1236.96 1092.45,1236.96 1093.46,1236.96 1094.47,1236.96 1095.47,1236.96 1096.48,1236.96 1097.49,1236.96 1098.49,1236.96 1099.50,1236.96 1100.51,1236.96 1101.51,1236.96 1102.52,1236.96 1103.53,1236.96 1104.53,1236.96 1105.54,1236.96 1106.55,1236.96 1107.55,1236.96 1108.56,1236.96 1109.57,1236.96 1110.57,1236.96 1111.58,1236.96 1112.59,1236.96 1113.59,1236.96 1114.60,1236.96 1115.61,1236.96 1116.61,1236.96 1117.62,1236.96 1118.63,1236.96 1119.63,1236.96 1120.64,1236.96 1121.65,1236.96 1122.65,1236.96 1123.66,1236.96 1124.67,1236.96 1125.67,1236.96 1126.68,1236.96 1127.69,1236.96 1128.69,1236.96 1129.70,1236.96 1130.71,1236.96 1131.71,1236.96 1132.72,1236.96 1133.73,1236.96 1134.73,1236.96 1135.74,1236.96 1136.75,1236.96 1137.75,1236.96 1138.76,1236.96 1139.77,1236.96 1140.77,1236.96 1141.78,1236.96 1142.79,1236.96 1143.79,1236.96 1144.80,1236.96 1145.81,1236.96 1146.81,1236.96 1147.82,1236.97 1148.83,1236.97 1149.83,1236.97 1150.84,1236.97 1151.85,1236.97 1152.85,1236.97 1153.86,1236.97 1154.87,1236.97 1155.87,1236.97 1156.88,1236.97 1157.89,1236.97 1158.89,1236.97 1159.90,1236.97 1160.91,1236.97 1161.91,1236.97 1162.92,1236.97 1163.93,1236.97 1164.93,1236.97 1165.94,1236.97 1166.95,1236.97 1167.95,1236.97 1168.96,1236.97 1169.97,1236.97 1170.97,1236.97 1171.98,1236.97 1172.99,1236.97 1173.99,1236.97 1175.00,1236.97 1176.01,1236.97 1177.01,1236.97 1178.02,1236.97 1179.03,1236.97 1180.03,1236.97 1181.04,1236.97 1182.05,1236.97 1183.05,1236.97 1184.06,1236.97 1185.07,1236.97 1186.07,1236.97 1187.08,1236.97 1188.09,1236.97 1189.09,1236.97 1190.10,1236.97 1191.11,1236.97 1192.11,1236.97 1193.12,1236.97 1194.13,1236.97 1195.13,1236.97 1196.14,1236.97 1197.15,1236.97 1198.15,1236.97 1199.16,1236.97 1200.17,1236.97 1201.17,1236.97 1202.18,1236.97 1203.19,1236.97 1204.19,1236.97 1205.20,1236.97 1206.21,1236.97 1207.21,1236.97 1208.22,1236.97 1209.23,1236.97 1210.23,1236.97 1211.24,1236.97 1212.25,1236.97 1213.25,1236.97 1214.26,1236.97 1215.27,1236.97 1216.27,1236.97 1217.28,1236.97 1218.29,1236.97 1219.29,1236.97 1220.30,1236.97 1221.31,1236.97 1222.31,1236.97 1223.32,1236.97 1224.33,1236.97 1225.33,1236.97 1226.34,1236.97 1227.35,1236.97 1228.35,1236.97 1229.36,1236.97 1230.37,1236.97 1231.37,1236.97 1232.38,1236.97 1233.39,1236.97 1234.39,1236.97 1235.40,1236.97 1236.41,1236.97 1237.41,1236.97 1238.42,1236.97 1239.43,1236.97 1240.43,1236.97 1241.44,1236.97 1242.45,1236.97 1243.45,1236.97 1244.46,1236.97 1245.47,1236.97 1246.47,1236.97 1247.48,1236.97 1248.49,1236.97 1249.49,1236.97 1250.50,1236.97" fill="none" stroke="#0000ff" stroke-width="1" clip-path="url(#cpb)" shape-rendering="crispEdges"/>
<polygon points="1533.5,238.5 1533.5,255.5 1524.5,246.5" fill="none" stroke="#0000ff" stroke-width="1.0" shape-rendering="crispEdges"/>
<rect x="1533.00" y="246.00" width="24.00" height="1" fill="#0000ff"/>
<circle cx="1575.5" cy="246.5" r="15" fill="none" stroke="#000080" stroke-width="1.0" shape-rendering="crispEdges"/>
<line x1="1566.5" y1="242.5" x2="1566.5" y2="251.5" stroke="#000080" stroke-width="1.0" shape-rendering="crispEdges"/>
<line x1="1581.5" y1="246.5" x2="1590.5" y2="246.5" stroke="#000080" stroke-width="1.0" shape-rendering="crispEdges"/>
<line x1="1585.5" y1="242.5" x2="1585.5" y2="251.5" stroke="#000080" stroke-width="1.0" shape-rendering="crispEdges"/>
<line x1="1556.5" y1="246.5" x2="1560.5" y2="246.5" stroke="#000080" stroke-width="1.0" shape-rendering="crispEdges"/>
<line x1="1590.5" y1="246.5" x2="1594.5" y2="246.5" stroke="#000080" stroke-width="1.0" shape-rendering="crispEdges"/>
<text x="1568.0 1575.0" y="227.80" font-size="9.3" fill="#000" font-weight="bold" stroke="#000" stroke-width="0.3">V7</text>
<text x="1572.0" y="270.50" font-size="9.3" fill="#000" font-weight="bold" stroke="#000" stroke-width="0.3">5</text>
<rect x="1594.00" y="246.00" width="25.00" height="1" fill="#0000ff"/>
<polyline points="1618.5,246.5 1621.5,246.5 1625.5,239.5 1633.5,253.5 1641.5,239.5 1648.5,253.5 1652.5,246.5 1655.5,246.5" fill="none" stroke="#000080" stroke-width="1.0" shape-rendering="crispEdges"/>
<text x="1627.0 1634.0 1640.0" y="236.30" font-size="9.3" fill="#000" font-weight="bold" stroke="#000" stroke-width="0.3">R37</text>
<text x="1628.0 1634.0 1640.0" y="263.30" font-size="9.3" fill="#000" font-weight="bold" stroke="#000" stroke-width="0.3">15k</text>
<rect x="1655.00" y="246.00" width="33.00" height="1" fill="#0000ff"/>
<polyline points="1687.5,246.5 1691.5,246.5 1695.5,239.5 1702.5,253.5 1710.5,239.5 1718.5,253.5 1721.5,246.5 1724.5,246.5" fill="none" stroke="#000080" stroke-width="1.0" shape-rendering="crispEdges"/>
<text x="1696.5 1703.5 1709.5" y="236.30" font-size="9.3" fill="#000" font-weight="bold" stroke="#000" stroke-width="0.3">R36</text>
<text x="1694.5 1700.5 1706.5 1712.5" y="263.30" font-size="9.3" fill="#000" font-weight="bold" stroke="#000" stroke-width="0.3">6k19</text>
<rect x="1724.00" y="246.00" width="156.00" height="1" fill="#0000ff"/>
<polyline points="1879.5,246.5 1883.5,246.5 1887.5,239.5 1894.5,253.5 1902.5,239.5 1910.5,253.5 1913.5,246.5 1916.5,246.5" fill="none" stroke="#000080" stroke-width="1.0" shape-rendering="crispEdges"/>
<text x="1888.5 1895.5 1901.5" y="236.30" font-size="9.3" fill="#000" font-weight="bold" stroke="#000" stroke-width="0.3">R32</text>
<text x="1889.5 1895.5 1901.5" y="263.30" font-size="9.3" fill="#000" font-weight="bold" stroke="#000" stroke-width="0.3">7k5</text>
<rect x="1916.00" y="246.00" width="34.00" height="1" fill="#0000ff"/>
<polyline points="1949.5,246.5 1953.5,246.5 1957.5,239.5 1964.5,253.5 1972.5,239.5 1980.5,253.5 1983.5,246.5 1986.5,246.5" fill="none" stroke="#000080" stroke-width="1.0" shape-rendering="crispEdges"/>
<text x="1958.5 1965.5 1971.5" y="236.30" font-size="9.3" fill="#000" font-weight="bold" stroke="#000" stroke-width="0.3">R30</text>
<text x="1959.5 1965.5 1971.5" y="263.30" font-size="9.3" fill="#000" font-weight="bold" stroke="#000" stroke-width="0.3">7k5</text>
<rect x="1986.00" y="246.00" width="117.00" height="1" fill="#0000ff"/>
<rect x="1669.00" y="244.00" width="5" height="5" fill="#0000ff"/>
<rect x="1831.00" y="244.00" width="5" height="5" fill="#0000ff"/>
<rect x="1931.00" y="244.00" width="5" height="5" fill="#0000ff"/>
<rect x="2100.00" y="244.00" width="5" height="5" fill="#0000ff"/>
<polygon points="1833.5,149.5 1839.5,155.5 1839.5,201.5 1833.5,207.5 1827.5,201.5 1827.5,155.5" fill="none" stroke="#0000ff" stroke-width="1.0" shape-rendering="crispEdges"/>
<text transform="translate(1836.20,175.95) rotate(-90)" x="-24.5 -21.5 -14.5 -5.5 2.5 10.5 17.5" y="0.00" font-size="11.5" fill="#000" font-weight="bold" stroke="#000" stroke-width="0.3">I_DSP_p</text>
<rect x="1833.00" y="207.00" width="1" height="40.00" fill="#0000ff"/>
<polygon points="2102.5,156.5 2108.5,162.5 2108.5,209.5 2102.5,215.5 2096.5,209.5 2096.5,162.5" fill="none" stroke="#0000ff" stroke-width="1.0" shape-rendering="crispEdges"/>
<text transform="translate(2105.20,183.50) rotate(-90)" x="-24.5 -21.5 -14.5 -5.5 2.5 10.5 17.5" y="0.00" font-size="11.5" fill="#000" font-weight="bold" stroke="#000" stroke-width="0.3">I_DSP_n</text>
<rect x="2102.00" y="215.00" width="1" height="32.00" fill="#0000ff"/>
<rect x="1671.00" y="246.00" width="1" height="93.00" fill="#0000ff"/>
<rect x="1671.00" y="338.00" width="17.00" height="1" fill="#0000ff"/>
<rect x="1671.00" y="276.00" width="64.00" height="1" fill="#0000ff"/>
<rect x="1669.00" y="274.00" width="5" height="5" fill="#0000ff"/>
<line x1="1734.5" y1="276.5" x2="1747.5" y2="276.5" stroke="#000080" stroke-width="1.0" shape-rendering="crispEdges"/>
<line x1="1751.5" y1="276.5" x2="1764.5" y2="276.5" stroke="#000080" stroke-width="1.0" shape-rendering="crispEdges"/>
<line x1="1747.5" y1="268.5" x2="1747.5" y2="284.5" stroke="#000080" stroke-width="1.0" shape-rendering="crispEdges"/>
<line x1="1751.5" y1="268.5" x2="1751.5" y2="284.5" stroke="#000080" stroke-width="1.0" shape-rendering="crispEdges"/>
<text x="1738.5 1745.5 1751.5" y="266.60" font-size="9.3" fill="#000" font-weight="bold" stroke="#000" stroke-width="0.3">C13</text>
<text x="1736.5 1742.5 1748.5 1754.5" y="293.80" font-size="9.3" fill="#000" font-weight="bold" stroke="#000" stroke-width="0.3">100p</text>
<rect x="1764.00" y="276.00" width="8.00" height="1" fill="#0000ff"/>
<rect x="1771.00" y="276.00" width="1" height="70.00" fill="#0000ff"/>
<polygon points="1687.5,330.5 1718.5,345.5 1687.5,361.5" fill="none" stroke="#000080" stroke-width="1.0" shape-rendering="crispEdges"/>
<line x1="1702.5" y1="337.5" x2="1702.5" y2="330.5" stroke="#000080" stroke-width="1.0" shape-rendering="crispEdges"/>
<line x1="1702.5" y1="353.5" x2="1702.5" y2="361.5" stroke="#000080" stroke-width="1.0" shape-rendering="crispEdges"/>
<line x1="1688.5" y1="338.5" x2="1693.5" y2="338.5" stroke="#000080" stroke-width="1.0" shape-rendering="crispEdges"/>
<line x1="1688.5" y1="353.5" x2="1693.5" y2="353.5" stroke="#000080" stroke-width="1.0" shape-rendering="crispEdges"/>
<line x1="1691.5" y1="350.5" x2="1691.5" y2="355.5" stroke="#000080" stroke-width="1.0" shape-rendering="crispEdges"/>
<line x1="1704.5" y1="336.5" x2="1709.5" y2="336.5" stroke="#000080" stroke-width="1.0" shape-rendering="crispEdges"/>
<line x1="1707.5" y1="333.5" x2="1707.5" y2="338.5" stroke="#000080" stroke-width="1.0" shape-rendering="crispEdges"/>
<line x1="1704.5" y1="355.5" x2="1709.5" y2="355.5" stroke="#000080" stroke-width="1.0" shape-rendering="crispEdges"/>
<rect x="1702.00" y="322.00" width="1" height="9.00" fill="#0000ff"/>
<rect x="1702.00" y="361.00" width="1" height="9.00" fill="#0000ff"/>
<polygon points="1702.5,291.5 1708.5,297.5 1708.5,316.5 1702.5,322.5 1696.5,316.5 1696.5,297.5" fill="none" stroke="#0000ff" stroke-width="1.0" shape-rendering="crispEdges"/>
<text transform="translate(1705.50,307.75) rotate(-90)" x="-8.0 0.0" y="0.00" font-size="11.5" fill="#000" font-weight="bold" stroke="#000" stroke-width="0.3">VP</text>
<polygon points="1702.5,369.5 1708.5,375.5 1708.5,393.5 1702.5,399.5 1696.5,393.5 1696.5,375.5" fill="none" stroke="#0000ff" stroke-width="1.0" shape-rendering="crispEdges"/>
<text transform="translate(1705.50,382.60) rotate(-90)" x="-8.5 -0.5" y="0.00" font-size="11.5" fill="#000" font-weight="bold" stroke="#000" stroke-width="0.3">VN</text>
<text x="1710.3 1717.3 1723.3" y="333.70" font-size="9.3" fill="#000" font-weight="bold" stroke="#000" stroke-width="0.3">U11</text>
<text x="1710.3 1716.3 1722.3 1728.3 1734.3 1740.3" y="364.50" font-size="9.3" fill="#000" font-weight="bold" stroke="#000" stroke-width="0.3">LT1792</text>
<rect x="1718.00" y="345.00" width="71.00" height="1" fill="#0000ff"/>
<rect x="1769.00" y="343.00" width="5" height="5" fill="#0000ff"/>
<polyline points="1788.5,345.5 1791.5,345.5 1795.5,338.5 1803.5,352.5 1811.5,338.5 1818.5,352.5 1822.5,345.5 1825.5,345.5" fill="none" stroke="#000080" stroke-width="1.0" shape-rendering="crispEdges"/>
<text x="1797.2 1804.2 1810.2" y="335.30" font-size="9.3" fill="#000" font-weight="bold" stroke="#000" stroke-width="0.3">R35</text>
<text x="1798.2 1804.2 1810.2" y="362.30" font-size="9.3" fill="#000" font-weight="bold" stroke="#000" stroke-width="0.3">220</text>
<rect x="1825.00" y="345.00" width="9.00" height="1" fill="#0000ff"/>
<rect x="1831.00" y="343.00" width="5" height="5" fill="#0000ff"/>
<rect x="1933.00" y="246.00" width="1" height="93.00" fill="#0000ff"/>
<rect x="1933.00" y="338.00" width="16.00" height="1" fill="#0000ff"/>
<rect x="1933.00" y="276.00" width="63.00" height="1" fill="#0000ff"/>
<rect x="1931.00" y="274.00" width="5" height="5" fill="#0000ff"/>
<line x1="1995.5" y1="276.5" x2="2008.5" y2="276.5" stroke="#000080" stroke-width="1.0" shape-rendering="crispEdges"/>
<line x1="2012.5" y1="276.5" x2="2025.5" y2="276.5" stroke="#000080" stroke-width="1.0" shape-rendering="crispEdges"/>
<line x1="2008.5" y1="268.5" x2="2008.5" y2="284.5" stroke="#000080" stroke-width="1.0" shape-rendering="crispEdges"/>
<line x1="2012.5" y1="268.5" x2="2012.5" y2="284.5" stroke="#000080" stroke-width="1.0" shape-rendering="crispEdges"/>
<text x="1999.5 2006.5 2012.5" y="266.60" font-size="9.3" fill="#000" font-weight="bold" stroke="#000" stroke-width="0.3">C12</text>
<text x="1997.5 2003.5 2009.5 2015.5" y="293.80" font-size="9.3" fill="#000" font-weight="bold" stroke="#000" stroke-width="0.3">100p</text>
<rect x="2025.00" y="276.00" width="9.00" height="1" fill="#0000ff"/>
<rect x="2033.00" y="276.00" width="1" height="70.00" fill="#0000ff"/>
<polygon points="1948.5,330.5 1979.5,345.5 1948.5,361.5" fill="none" stroke="#000080" stroke-width="1.0" shape-rendering="crispEdges"/>
<line x1="1963.5" y1="337.5" x2="1963.5" y2="330.5" stroke="#000080" stroke-width="1.0" shape-rendering="crispEdges"/>
<line x1="1963.5" y1="353.5" x2="1963.5" y2="361.5" stroke="#000080" stroke-width="1.0" shape-rendering="crispEdges"/>
<line x1="1949.5" y1="338.5" x2="1954.5" y2="338.5" stroke="#000080" stroke-width="1.0" shape-rendering="crispEdges"/>
<line x1="1949.5" y1="353.5" x2="1954.5" y2="353.5" stroke="#000080" stroke-width="1.0" shape-rendering="crispEdges"/>
<line x1="1952.5" y1="350.5" x2="1952.5" y2="355.5" stroke="#000080" stroke-width="1.0" shape-rendering="crispEdges"/>
<line x1="1965.5" y1="336.5" x2="1970.5" y2="336.5" stroke="#000080" stroke-width="1.0" shape-rendering="crispEdges"/>
<line x1="1968.5" y1="333.5" x2="1968.5" y2="338.5" stroke="#000080" stroke-width="1.0" shape-rendering="crispEdges"/>
<line x1="1965.5" y1="355.5" x2="1970.5" y2="355.5" stroke="#000080" stroke-width="1.0" shape-rendering="crispEdges"/>
<rect x="1963.00" y="322.00" width="1" height="9.00" fill="#0000ff"/>
<rect x="1963.00" y="361.00" width="1" height="9.00" fill="#0000ff"/>
<polygon points="1963.5,291.5 1969.5,297.5 1969.5,316.5 1963.5,322.5 1957.5,316.5 1957.5,297.5" fill="none" stroke="#0000ff" stroke-width="1.0" shape-rendering="crispEdges"/>
<text transform="translate(1966.60,307.75) rotate(-90)" x="-8.0 0.0" y="0.00" font-size="11.5" fill="#000" font-weight="bold" stroke="#000" stroke-width="0.3">VP</text>
<polygon points="1963.5,369.5 1969.5,375.5 1969.5,393.5 1963.5,399.5 1957.5,393.5 1957.5,375.5" fill="none" stroke="#0000ff" stroke-width="1.0" shape-rendering="crispEdges"/>
<text transform="translate(1966.60,382.60) rotate(-90)" x="-8.5 -0.5" y="0.00" font-size="11.5" fill="#000" font-weight="bold" stroke="#000" stroke-width="0.3">VN</text>
<text x="1971.4 1978.4 1984.4" y="333.70" font-size="9.3" fill="#000" font-weight="bold" stroke="#000" stroke-width="0.3">U10</text>
<text x="1971.4 1977.4 1983.4 1989.4 1995.4 2001.4" y="364.50" font-size="9.3" fill="#000" font-weight="bold" stroke="#000" stroke-width="0.3">LT1792</text>
<rect x="1933.00" y="353.00" width="16.00" height="1" fill="#0000ff"/>
<polygon points="1933.5,345.5 1933.5,362.5 1924.5,353.5" fill="none" stroke="#0000ff" stroke-width="1.0" shape-rendering="crispEdges"/>
<rect x="1979.00" y="345.00" width="71.00" height="1" fill="#0000ff"/>
<rect x="2031.00" y="343.00" width="5" height="5" fill="#0000ff"/>
<polyline points="2049.5,345.5 2052.5,345.5 2056.5,338.5 2064.5,352.5 2072.5,338.5 2079.5,352.5 2083.5,345.5 2086.5,345.5" fill="none" stroke="#000080" stroke-width="1.0" shape-rendering="crispEdges"/>
<text x="2058.0 2065.0 2071.0" y="335.30" font-size="9.3" fill="#000" font-weight="bold" stroke="#000" stroke-width="0.3">R27</text>
<text x="2059.0 2065.0 2071.0" y="362.30" font-size="9.3" fill="#000" font-weight="bold" stroke="#000" stroke-width="0.3">220</text>
<rect x="2086.00" y="345.00" width="17.00" height="1" fill="#0000ff"/>
<rect x="2102.00" y="246.00" width="1" height="100.00" fill="#0000ff"/>
<rect x="1372.00" y="353.00" width="55.00" height="1" fill="#0000ff"/>
<rect x="1372.00" y="353.00" width="1" height="59.00" fill="#0000ff"/>
<circle cx="1371.5" cy="426.5" r="15" fill="none" stroke="#000080" stroke-width="1.0" shape-rendering="crispEdges"/>
<line x1="1367.5" y1="417.5" x2="1376.5" y2="417.5" stroke="#000080" stroke-width="1.0" shape-rendering="crispEdges"/>
<line x1="1371.5" y1="412.5" x2="1371.5" y2="421.5" stroke="#000080" stroke-width="1.0" shape-rendering="crispEdges"/>
<line x1="1366.5" y1="436.5" x2="1376.5" y2="436.5" stroke="#000080" stroke-width="1.0" shape-rendering="crispEdges"/>
<text x="1347.0 1354.0" y="410.80" font-size="9.3" fill="#000" font-weight="bold" stroke="#000" stroke-width="0.3">B3</text>
<text x="1305.2 1312.2 1318.2 1325.2 1328.2 1334.2 1337.2 1341.2 1348.2 1351.2 1357.2" y="449.00" font-size="9.3" fill="#000" font-weight="bold" stroke="#000" stroke-width="0.3">V=V(a)*V(b)</text>
<rect x="1372.00" y="441.00" width="1" height="52.00" fill="#0000ff"/>
<polygon points="1364.5,492.5 1381.5,492.5 1372.5,501.5" fill="none" stroke="#0000ff" stroke-width="1.0" shape-rendering="crispEdges"/>
<rect x="1426.00" y="353.00" width="1" height="63.00" fill="#0000ff"/>
<polyline points="1426.5,415.5 1437.5,415.5 1440.5,418.5" fill="none" stroke="#000080" stroke-width="1.0" shape-rendering="crispEdges"/>
<polyline points="1426.5,438.5 1437.5,438.5 1440.5,436.5" fill="none" stroke="#000080" stroke-width="1.0" shape-rendering="crispEdges"/>
<line x1="1425.5" y1="418.5" x2="1429.5" y2="418.5" stroke="#000080" stroke-width="1.0" shape-rendering="crispEdges"/>
<line x1="1427.5" y1="416.5" x2="1427.5" y2="420.5" stroke="#000080" stroke-width="1.0" shape-rendering="crispEdges"/>
<line x1="1425.5" y1="434.5" x2="1429.5" y2="434.5" stroke="#000080" stroke-width="1.0" shape-rendering="crispEdges"/>
<rect x="1426.00" y="438.00" width="1" height="55.00" fill="#0000ff"/>
<polygon points="1418.5,492.5 1435.5,492.5 1426.5,501.5" fill="none" stroke="#0000ff" stroke-width="1.0" shape-rendering="crispEdges"/>
<circle cx="1449" cy="426.3" r="15" fill="none" stroke="#000080" stroke-width="1.0" shape-rendering="crispEdges"/>
<line x1="1447.5" y1="418.5" x2="1451.5" y2="418.5" stroke="#000080" stroke-width="1.0" shape-rendering="crispEdges"/>
<line x1="1449.5" y1="416.5" x2="1449.5" y2="420.5" stroke="#000080" stroke-width="1.0" shape-rendering="crispEdges"/>
<line x1="1447.5" y1="434.5" x2="1451.5" y2="434.5" stroke="#000080" stroke-width="1.0" shape-rendering="crispEdges"/>
<rect x="1449.00" y="353.00" width="1" height="59.00" fill="#0000ff"/>
<rect x="1449.00" y="441.00" width="1" height="52.00" fill="#0000ff"/>
<polygon points="1441.5,492.5 1458.5,492.5 1449.5,501.5" fill="none" stroke="#0000ff" stroke-width="1.0" shape-rendering="crispEdges"/>
<text x="1460.0 1467.0" y="410.80" font-size="9.3" fill="#000" font-weight="bold" stroke="#000" stroke-width="0.3">E3</text>
<text x="1460.0 1466.0 1472.0" y="448.80" font-size="9.3" fill="#000" font-weight="bold" stroke="#000" stroke-width="0.3">40m</text>
<rect x="1449.00" y="353.00" width="47.00" height="1" fill="#0000ff"/>
<circle cx="1513.5" cy="353.5" r="15" fill="none" stroke="#000080" stroke-width="1.0" shape-rendering="crispEdges"/>
<line x1="1504.5" y1="349.5" x2="1504.5" y2="358.5" stroke="#000080" stroke-width="1.0" shape-rendering="crispEdges"/>
<line x1="1519.5" y1="353.5" x2="1528.5" y2="353.5" stroke="#000080" stroke-width="1.0" shape-rendering="crispEdges"/>
<line x1="1523.5" y1="349.5" x2="1523.5" y2="358.5" stroke="#000080" stroke-width="1.0" shape-rendering="crispEdges"/>
<line x1="1494.5" y1="353.5" x2="1498.5" y2="353.5" stroke="#000080" stroke-width="1.0" shape-rendering="crispEdges"/>
<line x1="1528.5" y1="353.5" x2="1532.5" y2="353.5" stroke="#000080" stroke-width="1.0" shape-rendering="crispEdges"/>
<text x="1506.9 1513.9" y="335.30" font-size="9.3" fill="#000" font-weight="bold" stroke="#000" stroke-width="0.3">V6</text>
<text x="1506.0 1512.0 1515.0" y="378.80" font-size="9.3" fill="#000" font-weight="bold" stroke="#000" stroke-width="0.3">2.5</text>
<rect x="1532.00" y="353.00" width="86.00" height="1" fill="#0000ff"/>
<rect x="1570.00" y="351.00" width="5" height="5" fill="#0000ff"/>
<rect x="1572.00" y="353.00" width="1" height="64.00" fill="#0000ff"/>
<polygon points="1572.5,416.5 1578.5,422.5 1578.5,482.5 1572.5,488.5 1566.5,482.5 1566.5,422.5" fill="none" stroke="#0000ff" stroke-width="1.0" shape-rendering="crispEdges"/>
<text transform="translate(1575.20,454.00) rotate(-90)" x="-33.5 -24.5 -17.5 -14.5 -11.5 -7.5 0.5 7.5 14.5 21.5 28.5" y="0.00" font-size="11.5" fill="#000" font-weight="bold" stroke="#000" stroke-width="0.3">Hall-Sensor</text>
<polyline points="1617.5,353.5 1621.5,353.5 1625.5,346.5 1632.5,360.5 1640.5,346.5 1648.5,360.5 1651.5,353.5 1654.5,353.5" fill="none" stroke="#000080" stroke-width="1.0" shape-rendering="crispEdges"/>
<text x="1629.5 1636.5" y="343.30" font-size="9.3" fill="#000" font-weight="bold" stroke="#000" stroke-width="0.3">R1</text>
<text x="1627.5 1633.5 1639.5" y="370.30" font-size="9.3" fill="#000" font-weight="bold" stroke="#000" stroke-width="0.3">3k3</text>
<rect x="1654.00" y="353.00" width="34.00" height="1" fill="#0000ff"/>
<rect x="1669.00" y="351.00" width="5" height="5" fill="#0000ff"/>
<rect x="1671.00" y="353.00" width="1" height="48.00" fill="#0000ff"/>
<polyline points="1671.5,400.5 1671.5,403.5 1679.5,407.5 1663.5,415.5 1679.5,423.5 1663.5,430.5 1671.5,434.5 1671.5,437.5" fill="none" stroke="#000080" stroke-width="1.0" shape-rendering="crispEdges"/>
<text x="1681.5 1688.5" y="414.50" font-size="9.3" fill="#000" font-weight="bold" stroke="#000" stroke-width="0.3">R2</text>
<text x="1681.5 1687.5 1693.5" y="432.00" font-size="9.3" fill="#000" font-weight="bold" stroke="#000" stroke-width="0.3">4k7</text>
<rect x="1671.00" y="437.00" width="1" height="9.00" fill="#0000ff"/>
<polygon points="1663.5,445.5 1680.5,445.5 1671.5,453.5" fill="none" stroke="#0000ff" stroke-width="1.0" shape-rendering="crispEdges"/>
<rect x="1833.00" y="246.00" width="1" height="639.00" fill="#0000ff"/>
<rect x="1831.00" y="443.00" width="5" height="5" fill="#0000ff"/>
<rect x="1833.00" y="445.00" width="170.00" height="1" fill="#0000ff"/>
<polyline points="2002.5,445.5 2006.5,445.5 2010.5,438.5 2017.5,452.5 2025.5,438.5 2033.5,452.5 2036.5,445.5 2039.5,445.5" fill="none" stroke="#000080" stroke-width="1.0" shape-rendering="crispEdges"/>
<text x="2014.8 2021.8" y="435.30" font-size="9.3" fill="#000" font-weight="bold" stroke="#000" stroke-width="0.3">R6</text>
<text x="2015.8 2021.8" y="462.30" font-size="9.3" fill="#000" font-weight="bold" stroke="#000" stroke-width="0.3">3k</text>
<rect x="1831.00" y="497.00" width="5" height="5" fill="#0000ff"/>
<rect x="1833.00" y="499.00" width="32.00" height="1" fill="#0000ff"/>
<polyline points="1864.5,499.5 1868.5,499.5 1872.5,492.5 1879.5,506.5 1887.5,492.5 1895.5,506.5 1898.5,499.5 1901.5,499.5" fill="none" stroke="#000080" stroke-width="1.0" shape-rendering="crispEdges"/>
<text x="1876.5 1883.5" y="489.30" font-size="9.3" fill="#000" font-weight="bold" stroke="#000" stroke-width="0.3">R7</text>
<text x="1874.5 1880.5 1886.5" y="516.30" font-size="9.3" fill="#000" font-weight="bold" stroke="#000" stroke-width="0.3">10k</text>
<rect x="1901.00" y="499.00" width="102.00" height="1" fill="#0000ff"/>
<rect x="1931.00" y="497.00" width="5" height="5" fill="#0000ff"/>
<polyline points="2002.5,499.5 2006.5,499.5 2010.5,492.5 2017.5,506.5 2025.5,492.5 2033.5,506.5 2036.5,499.5 2039.5,499.5" fill="none" stroke="#000080" stroke-width="1.0" shape-rendering="crispEdges"/>
<text x="2014.8 2021.8" y="489.30" font-size="9.3" fill="#000" font-weight="bold" stroke="#000" stroke-width="0.3">R5</text>
<text x="2012.8 2018.8 2024.8" y="516.30" font-size="9.3" fill="#000" font-weight="bold" stroke="#000" stroke-width="0.3">10k</text>
<rect x="2039.00" y="499.00" width="103.00" height="1" fill="#0000ff"/>
<rect x="2100.00" y="497.00" width="5" height="5" fill="#0000ff"/>
<polyline points="2141.5,499.5 2145.5,499.5 2149.5,492.5 2156.5,506.5 2164.5,492.5 2172.5,506.5 2175.5,499.5 2178.5,499.5" fill="none" stroke="#000080" stroke-width="1.0" shape-rendering="crispEdges"/>
<text x="2153.5 2160.5" y="489.30" font-size="9.3" fill="#000" font-weight="bold" stroke="#000" stroke-width="0.3">R9</text>
<text x="2151.5 2157.5 2163.5" y="516.30" font-size="9.3" fill="#000" font-weight="bold" stroke="#000" stroke-width="0.3">1k5</text>
<rect x="2102.00" y="499.00" width="1" height="33.00" fill="#0000ff"/>
<line x1="2102.5" y1="531.5" x2="2102.5" y2="540.5" stroke="#000080" stroke-width="1.0" shape-rendering="crispEdges"/>
<line x1="2102.5" y1="551.5" x2="2102.5" y2="560.5" stroke="#000080" stroke-width="1.0" shape-rendering="crispEdges"/>
<polygon points="2094.5,540.5 2110.5,540.5 2102.5,551.5" fill="none" stroke="#000080" stroke-width="1.0" shape-rendering="crispEdges"/>
<line x1="2094.5" y1="551.5" x2="2110.5" y2="551.5" stroke="#000080" stroke-width="1.0" shape-rendering="crispEdges"/>
<text x="2106.0 2113.0" y="533.30" font-size="9.3" fill="#000" font-weight="bold" stroke="#000" stroke-width="0.3">D2</text>
<text x="2106.8 2112.8 2119.8 2125.8 2131.8 2137.8" y="564.30" font-size="9.3" fill="#000" font-weight="bold" stroke="#000" stroke-width="0.3">1N4148</text>
<rect x="2102.00" y="560.00" width="1" height="163.00" fill="#0000ff"/>
<rect x="1933.00" y="584.00" width="71.00" height="1" fill="#0000ff"/>
<rect x="1931.00" y="582.00" width="5" height="5" fill="#0000ff"/>
<line x1="2003.5" y1="584.5" x2="2011.5" y2="584.5" stroke="#000080" stroke-width="1.0" shape-rendering="crispEdges"/>
<line x1="2023.5" y1="584.5" x2="2032.5" y2="584.5" stroke="#000080" stroke-width="1.0" shape-rendering="crispEdges"/>
<polygon points="2023.5,576.5 2023.5,592.5 2011.5,584.5" fill="none" stroke="#000080" stroke-width="1.0" shape-rendering="crispEdges"/>
<line x1="2011.5" y1="576.5" x2="2011.5" y2="592.5" stroke="#000080" stroke-width="1.0" shape-rendering="crispEdges"/>
<text x="2009.5 2016.5" y="573.70" font-size="9.3" fill="#000" font-weight="bold" stroke="#000" stroke-width="0.3">D1</text>
<text x="1998.0 2004.0 2011.0 2017.0 2023.0 2029.0" y="600.70" font-size="9.3" fill="#000" font-weight="bold" stroke="#000" stroke-width="0.3">1N4148</text>
<rect x="2032.00" y="584.00" width="71.00" height="1" fill="#0000ff"/>
<rect x="2100.00" y="582.00" width="5" height="5" fill="#0000ff"/>
<rect x="1933.00" y="645.00" width="70.00" height="1" fill="#0000ff"/>
<rect x="1931.00" y="643.00" width="5" height="5" fill="#0000ff"/>
<line x1="2002.5" y1="645.5" x2="2015.5" y2="645.5" stroke="#000080" stroke-width="1.0" shape-rendering="crispEdges"/>
<line x1="2019.5" y1="645.5" x2="2032.5" y2="645.5" stroke="#000080" stroke-width="1.0" shape-rendering="crispEdges"/>
<line x1="2015.5" y1="637.5" x2="2015.5" y2="653.5" stroke="#000080" stroke-width="1.0" shape-rendering="crispEdges"/>
<line x1="2019.5" y1="637.5" x2="2019.5" y2="653.5" stroke="#000080" stroke-width="1.0" shape-rendering="crispEdges"/>
<text x="2010.0 2017.0" y="635.60" font-size="9.3" fill="#000" font-weight="bold" stroke="#000" stroke-width="0.3">C2</text>
<text x="2005.0 2011.0 2017.0 2023.0" y="662.80" font-size="9.3" fill="#000" font-weight="bold" stroke="#000" stroke-width="0.3">100p</text>
<rect x="2032.00" y="645.00" width="71.00" height="1" fill="#0000ff"/>
<rect x="2100.00" y="643.00" width="5" height="5" fill="#0000ff"/>
<rect x="1933.00" y="499.00" width="1" height="216.00" fill="#0000ff"/>
<rect x="1933.00" y="714.00" width="93.00" height="1" fill="#0000ff"/>
<polygon points="2025.5,707.5 2056.5,722.5 2025.5,738.5" fill="none" stroke="#000080" stroke-width="1.0" shape-rendering="crispEdges"/>
<line x1="2040.5" y1="714.5" x2="2040.5" y2="707.5" stroke="#000080" stroke-width="1.0" shape-rendering="crispEdges"/>
<line x1="2040.5" y1="730.5" x2="2040.5" y2="738.5" stroke="#000080" stroke-width="1.0" shape-rendering="crispEdges"/>
<line x1="2026.5" y1="715.5" x2="2031.5" y2="715.5" stroke="#000080" stroke-width="1.0" shape-rendering="crispEdges"/>
<line x1="2026.5" y1="730.5" x2="2031.5" y2="730.5" stroke="#000080" stroke-width="1.0" shape-rendering="crispEdges"/>
<line x1="2029.5" y1="727.5" x2="2029.5" y2="732.5" stroke="#000080" stroke-width="1.0" shape-rendering="crispEdges"/>
<line x1="2042.5" y1="713.5" x2="2047.5" y2="713.5" stroke="#000080" stroke-width="1.0" shape-rendering="crispEdges"/>
<line x1="2045.5" y1="710.5" x2="2045.5" y2="715.5" stroke="#000080" stroke-width="1.0" shape-rendering="crispEdges"/>
<line x1="2042.5" y1="732.5" x2="2047.5" y2="732.5" stroke="#000080" stroke-width="1.0" shape-rendering="crispEdges"/>
<rect x="2040.00" y="699.00" width="1" height="9.00" fill="#0000ff"/>
<rect x="2040.00" y="738.00" width="1" height="9.00" fill="#0000ff"/>
<polygon points="2040.5,668.5 2046.5,674.5 2046.5,693.5 2040.5,699.5 2034.5,693.5 2034.5,674.5" fill="none" stroke="#0000ff" stroke-width="1.0" shape-rendering="crispEdges"/>
<text transform="translate(2043.60,684.75) rotate(-90)" x="-8.0 0.0" y="0.00" font-size="11.5" fill="#000" font-weight="bold" stroke="#000" stroke-width="0.3">VP</text>
<polygon points="2040.5,746.5 2046.5,752.5 2046.5,770.5 2040.5,776.5 2034.5,770.5 2034.5,752.5" fill="none" stroke="#0000ff" stroke-width="1.0" shape-rendering="crispEdges"/>
<text transform="translate(2043.60,759.60) rotate(-90)" x="-8.5 -0.5" y="0.00" font-size="11.5" fill="#000" font-weight="bold" stroke="#000" stroke-width="0.3">VN</text>
<text x="2048.4 2055.4" y="710.70" font-size="9.3" fill="#000" font-weight="bold" stroke="#000" stroke-width="0.3">U1</text>
<text x="2048.4 2054.4 2060.4 2066.4 2072.4 2078.4" y="741.50" font-size="9.3" fill="#000" font-weight="bold" stroke="#000" stroke-width="0.3">LT1792</text>
<rect x="2056.00" y="722.00" width="47.00" height="1" fill="#0000ff"/>
<rect x="2002.00" y="730.00" width="24.00" height="1" fill="#0000ff"/>
<rect x="2002.00" y="730.00" width="1" height="32.00" fill="#0000ff"/>
<polygon points="1994.5,761.5 2011.5,761.5 2002.5,770.5" fill="none" stroke="#0000ff" stroke-width="1.0" shape-rendering="crispEdges"/>
<rect x="2039.00" y="445.00" width="195.00" height="1" fill="#0000ff"/>
<rect x="2200.00" y="443.00" width="5" height="5" fill="#0000ff"/>
<line x1="2233.5" y1="445.5" x2="2246.5" y2="445.5" stroke="#000080" stroke-width="1.0" shape-rendering="crispEdges"/>
<line x1="2250.5" y1="445.5" x2="2263.5" y2="445.5" stroke="#000080" stroke-width="1.0" shape-rendering="crispEdges"/>
<line x1="2246.5" y1="437.5" x2="2246.5" y2="453.5" stroke="#000080" stroke-width="1.0" shape-rendering="crispEdges"/>
<line x1="2250.5" y1="437.5" x2="2250.5" y2="453.5" stroke="#000080" stroke-width="1.0" shape-rendering="crispEdges"/>
<text x="2241.0 2248.0" y="435.60" font-size="9.3" fill="#000" font-weight="bold" stroke="#000" stroke-width="0.3">C1</text>
<text x="2239.0 2245.0 2251.0" y="462.80" font-size="9.3" fill="#000" font-weight="bold" stroke="#000" stroke-width="0.3">10μ</text>
<rect x="2263.00" y="445.00" width="55.00" height="1" fill="#0000ff"/>
<rect x="2317.00" y="445.00" width="1" height="147.00" fill="#0000ff"/>
<rect x="2178.00" y="499.00" width="48.00" height="1" fill="#0000ff"/>
<rect x="2200.00" y="497.00" width="5" height="5" fill="#0000ff"/>
<polyline points="2225.5,499.5 2229.5,499.5 2233.5,492.5 2240.5,506.5 2248.5,492.5 2256.5,506.5 2259.5,499.5 2262.5,499.5" fill="none" stroke="#000080" stroke-width="1.0" shape-rendering="crispEdges"/>
<text x="2234.5 2241.5 2247.5" y="489.30" font-size="9.3" fill="#000" font-weight="bold" stroke="#000" stroke-width="0.3">R10</text>
<text x="2235.5 2241.5 2247.5" y="516.30" font-size="9.3" fill="#000" font-weight="bold" stroke="#000" stroke-width="0.3">10k</text>
<rect x="2262.00" y="499.00" width="56.00" height="1" fill="#0000ff"/>
<rect x="2315.00" y="497.00" width="5" height="5" fill="#0000ff"/>
<rect x="2202.00" y="445.00" width="1" height="140.00" fill="#0000ff"/>
<rect x="2202.00" y="584.00" width="24.00" height="1" fill="#0000ff"/>
<polygon points="2225.5,576.5 2256.5,591.5 2225.5,607.5" fill="none" stroke="#000080" stroke-width="1.0" shape-rendering="crispEdges"/>
<line x1="2241.5" y1="583.5" x2="2241.5" y2="576.5" stroke="#000080" stroke-width="1.0" shape-rendering="crispEdges"/>
<line x1="2241.5" y1="599.5" x2="2241.5" y2="607.5" stroke="#000080" stroke-width="1.0" shape-rendering="crispEdges"/>
<line x1="2227.5" y1="584.5" x2="2232.5" y2="584.5" stroke="#000080" stroke-width="1.0" shape-rendering="crispEdges"/>
<line x1="2227.5" y1="599.5" x2="2232.5" y2="599.5" stroke="#000080" stroke-width="1.0" shape-rendering="crispEdges"/>
<line x1="2229.5" y1="596.5" x2="2229.5" y2="601.5" stroke="#000080" stroke-width="1.0" shape-rendering="crispEdges"/>
<line x1="2243.5" y1="582.5" x2="2248.5" y2="582.5" stroke="#000080" stroke-width="1.0" shape-rendering="crispEdges"/>
<line x1="2245.5" y1="579.5" x2="2245.5" y2="584.5" stroke="#000080" stroke-width="1.0" shape-rendering="crispEdges"/>
<line x1="2243.5" y1="601.5" x2="2248.5" y2="601.5" stroke="#000080" stroke-width="1.0" shape-rendering="crispEdges"/>
<rect x="2241.00" y="568.00" width="1" height="9.00" fill="#0000ff"/>
<rect x="2241.00" y="607.00" width="1" height="9.00" fill="#0000ff"/>
<polygon points="2241.5,537.5 2247.5,543.5 2247.5,562.5 2241.5,568.5 2234.5,562.5 2234.5,543.5" fill="none" stroke="#0000ff" stroke-width="1.0" shape-rendering="crispEdges"/>
<text transform="translate(2244.00,553.75) rotate(-90)" x="-8.0 0.0" y="0.00" font-size="11.5" fill="#000" font-weight="bold" stroke="#000" stroke-width="0.3">VP</text>
<polygon points="2241.5,615.5 2247.5,621.5 2247.5,639.5 2241.5,645.5 2234.5,639.5 2234.5,621.5" fill="none" stroke="#0000ff" stroke-width="1.0" shape-rendering="crispEdges"/>
<text transform="translate(2244.00,628.60) rotate(-90)" x="-8.5 -0.5" y="0.00" font-size="11.5" fill="#000" font-weight="bold" stroke="#000" stroke-width="0.3">VN</text>
<text x="2248.8 2255.8" y="579.70" font-size="9.3" fill="#000" font-weight="bold" stroke="#000" stroke-width="0.3">U2</text>
<text x="2248.8 2254.8 2260.8 2266.8 2272.8 2278.8" y="610.50" font-size="9.3" fill="#000" font-weight="bold" stroke="#000" stroke-width="0.3">LT1792</text>
<rect x="2202.00" y="599.00" width="24.00" height="1" fill="#0000ff"/>
<rect x="2202.00" y="599.00" width="1" height="32.00" fill="#0000ff"/>
<polygon points="2194.5,630.5 2211.5,630.5 2202.5,638.5" fill="none" stroke="#0000ff" stroke-width="1.0" shape-rendering="crispEdges"/>
<rect x="2256.00" y="591.00" width="85.00" height="1" fill="#0000ff"/>
<rect x="2315.00" y="589.00" width="5" height="5" fill="#0000ff"/>
<polygon points="2340.5,591.5 2346.5,585.5 2380.5,585.5 2386.5,591.5 2380.5,597.5 2346.5,597.5" fill="none" stroke="#0000ff" stroke-width="1.0" shape-rendering="crispEdges"/>
<text x="2348.4 2354.4 2357.4 2363.4 2369.4 2375.4" y="594.80" font-size="9.3" fill="#000" font-weight="bold" stroke="#000" stroke-width="0.3">einpol</text>
<rect x="1831.00" y="828.00" width="5" height="5" fill="#0000ff"/>
<rect x="1833.00" y="830.00" width="170.00" height="1" fill="#0000ff"/>
<polyline points="2002.5,830.5 2006.5,830.5 2010.5,822.5 2017.5,837.5 2025.5,822.5 2033.5,837.5 2036.5,830.5 2039.5,830.5" fill="none" stroke="#000080" stroke-width="1.0" shape-rendering="crispEdges"/>
<text x="2011.8 2018.8 2024.8" y="819.80" font-size="9.3" fill="#000" font-weight="bold" stroke="#000" stroke-width="0.3">R12</text>
<text x="2015.8 2021.8" y="846.80" font-size="9.3" fill="#000" font-weight="bold" stroke="#000" stroke-width="0.3">3k</text>
<rect x="1833.00" y="884.00" width="32.00" height="1" fill="#0000ff"/>
<polyline points="1864.5,884.5 1868.5,884.5 1872.5,876.5 1879.5,891.5 1887.5,876.5 1895.5,891.5 1898.5,884.5 1901.5,884.5" fill="none" stroke="#000080" stroke-width="1.0" shape-rendering="crispEdges"/>
<text x="1876.5 1883.5" y="873.80" font-size="9.3" fill="#000" font-weight="bold" stroke="#000" stroke-width="0.3">R3</text>
<text x="1874.5 1880.5 1886.5" y="900.80" font-size="9.3" fill="#000" font-weight="bold" stroke="#000" stroke-width="0.3">10k</text>
<rect x="1901.00" y="884.00" width="102.00" height="1" fill="#0000ff"/>
<rect x="1931.00" y="882.00" width="5" height="5" fill="#0000ff"/>
<polyline points="2002.5,884.5 2006.5,884.5 2010.5,876.5 2017.5,891.5 2025.5,876.5 2033.5,891.5 2036.5,884.5 2039.5,884.5" fill="none" stroke="#000080" stroke-width="1.0" shape-rendering="crispEdges"/>
<text x="2014.8 2021.8" y="873.80" font-size="9.3" fill="#000" font-weight="bold" stroke="#000" stroke-width="0.3">R4</text>
<text x="2012.8 2018.8 2024.8" y="900.80" font-size="9.3" fill="#000" font-weight="bold" stroke="#000" stroke-width="0.3">10k</text>
<rect x="2039.00" y="884.00" width="103.00" height="1" fill="#0000ff"/>
<rect x="2100.00" y="882.00" width="5" height="5" fill="#0000ff"/>
<polyline points="2141.5,884.5 2145.5,884.5 2149.5,876.5 2156.5,891.5 2164.5,876.5 2172.5,891.5 2175.5,884.5 2178.5,884.5" fill="none" stroke="#000080" stroke-width="1.0" shape-rendering="crispEdges"/>
<text x="2153.5 2160.5" y="873.80" font-size="9.3" fill="#000" font-weight="bold" stroke="#000" stroke-width="0.3">R8</text>
<text x="2151.5 2157.5 2163.5" y="900.80" font-size="9.3" fill="#000" font-weight="bold" stroke="#000" stroke-width="0.3">1k5</text>
<rect x="2102.00" y="884.00" width="1" height="32.00" fill="#0000ff"/>
<line x1="2102.5" y1="915.5" x2="2102.5" y2="925.5" stroke="#000080" stroke-width="1.0" shape-rendering="crispEdges"/>
<line x1="2102.5" y1="936.5" x2="2102.5" y2="945.5" stroke="#000080" stroke-width="1.0" shape-rendering="crispEdges"/>
<polygon points="2094.5,925.5 2110.5,925.5 2102.5,936.5" fill="none" stroke="#000080" stroke-width="1.0" shape-rendering="crispEdges"/>
<line x1="2094.5" y1="936.5" x2="2110.5" y2="936.5" stroke="#000080" stroke-width="1.0" shape-rendering="crispEdges"/>
<text x="2106.0 2113.0" y="917.80" font-size="9.3" fill="#000" font-weight="bold" stroke="#000" stroke-width="0.3">D4</text>
<text x="2106.8 2112.8 2119.8 2125.8 2131.8 2137.8" y="948.80" font-size="9.3" fill="#000" font-weight="bold" stroke="#000" stroke-width="0.3">1N4148</text>
<rect x="2102.00" y="945.00" width="1" height="162.00" fill="#0000ff"/>
<rect x="1933.00" y="969.00" width="71.00" height="1" fill="#0000ff"/>
<rect x="1931.00" y="967.00" width="5" height="5" fill="#0000ff"/>
<line x1="2003.5" y1="969.5" x2="2011.5" y2="969.5" stroke="#000080" stroke-width="1.0" shape-rendering="crispEdges"/>
<line x1="2023.5" y1="969.5" x2="2032.5" y2="969.5" stroke="#000080" stroke-width="1.0" shape-rendering="crispEdges"/>
<polygon points="2023.5,961.5 2023.5,977.5 2011.5,969.5" fill="none" stroke="#000080" stroke-width="1.0" shape-rendering="crispEdges"/>
<line x1="2011.5" y1="961.5" x2="2011.5" y2="977.5" stroke="#000080" stroke-width="1.0" shape-rendering="crispEdges"/>
<text x="2009.5 2016.5" y="958.20" font-size="9.3" fill="#000" font-weight="bold" stroke="#000" stroke-width="0.3">D3</text>
<text x="1998.0 2004.0 2011.0 2017.0 2023.0 2029.0" y="985.20" font-size="9.3" fill="#000" font-weight="bold" stroke="#000" stroke-width="0.3">1N4148</text>
<rect x="2032.00" y="969.00" width="71.00" height="1" fill="#0000ff"/>
<rect x="2100.00" y="967.00" width="5" height="5" fill="#0000ff"/>
<rect x="1933.00" y="1030.00" width="70.00" height="1" fill="#0000ff"/>
<rect x="1931.00" y="1028.00" width="5" height="5" fill="#0000ff"/>
<line x1="2002.5" y1="1030.5" x2="2015.5" y2="1030.5" stroke="#000080" stroke-width="1.0" shape-rendering="crispEdges"/>
<line x1="2019.5" y1="1030.5" x2="2032.5" y2="1030.5" stroke="#000080" stroke-width="1.0" shape-rendering="crispEdges"/>
<line x1="2015.5" y1="1022.5" x2="2015.5" y2="1038.5" stroke="#000080" stroke-width="1.0" shape-rendering="crispEdges"/>
<line x1="2019.5" y1="1022.5" x2="2019.5" y2="1038.5" stroke="#000080" stroke-width="1.0" shape-rendering="crispEdges"/>
<text x="2010.0 2017.0" y="1020.10" font-size="9.3" fill="#000" font-weight="bold" stroke="#000" stroke-width="0.3">C3</text>
<text x="2005.0 2011.0 2017.0 2023.0" y="1047.30" font-size="9.3" fill="#000" font-weight="bold" stroke="#000" stroke-width="0.3">100p</text>
<rect x="2032.00" y="1030.00" width="71.00" height="1" fill="#0000ff"/>
<rect x="2100.00" y="1028.00" width="5" height="5" fill="#0000ff"/>
<rect x="1933.00" y="884.00" width="1" height="215.00" fill="#0000ff"/>
<rect x="1933.00" y="1098.00" width="93.00" height="1" fill="#0000ff"/>
<polygon points="2025.5,1091.5 2056.5,1106.5 2025.5,1122.5" fill="none" stroke="#000080" stroke-width="1.0" shape-rendering="crispEdges"/>
<line x1="2040.5" y1="1098.5" x2="2040.5" y2="1091.5" stroke="#000080" stroke-width="1.0" shape-rendering="crispEdges"/>
<line x1="2040.5" y1="1114.5" x2="2040.5" y2="1122.5" stroke="#000080" stroke-width="1.0" shape-rendering="crispEdges"/>
<line x1="2026.5" y1="1099.5" x2="2031.5" y2="1099.5" stroke="#000080" stroke-width="1.0" shape-rendering="crispEdges"/>
<line x1="2026.5" y1="1114.5" x2="2031.5" y2="1114.5" stroke="#000080" stroke-width="1.0" shape-rendering="crispEdges"/>
<line x1="2029.5" y1="1111.5" x2="2029.5" y2="1116.5" stroke="#000080" stroke-width="1.0" shape-rendering="crispEdges"/>
<line x1="2042.5" y1="1097.5" x2="2047.5" y2="1097.5" stroke="#000080" stroke-width="1.0" shape-rendering="crispEdges"/>
<line x1="2045.5" y1="1094.5" x2="2045.5" y2="1099.5" stroke="#000080" stroke-width="1.0" shape-rendering="crispEdges"/>
<line x1="2042.5" y1="1116.5" x2="2047.5" y2="1116.5" stroke="#000080" stroke-width="1.0" shape-rendering="crispEdges"/>
<rect x="2040.00" y="1083.00" width="1" height="9.00" fill="#0000ff"/>
<rect x="2040.00" y="1122.00" width="1" height="9.00" fill="#0000ff"/>
<polygon points="2040.5,1052.5 2046.5,1058.5 2046.5,1077.5 2040.5,1083.5 2034.5,1077.5 2034.5,1058.5" fill="none" stroke="#0000ff" stroke-width="1.0" shape-rendering="crispEdges"/>
<text transform="translate(2043.60,1068.75) rotate(-90)" x="-8.0 0.0" y="0.00" font-size="11.5" fill="#000" font-weight="bold" stroke="#000" stroke-width="0.3">VP</text>
<polygon points="2040.5,1130.5 2046.5,1136.5 2046.5,1154.5 2040.5,1160.5 2034.5,1154.5 2034.5,1136.5" fill="none" stroke="#0000ff" stroke-width="1.0" shape-rendering="crispEdges"/>
<text transform="translate(2043.60,1143.60) rotate(-90)" x="-8.5 -0.5" y="0.00" font-size="11.5" fill="#000" font-weight="bold" stroke="#000" stroke-width="0.3">VN</text>
<text x="2048.4 2055.4" y="1094.70" font-size="9.3" fill="#000" font-weight="bold" stroke="#000" stroke-width="0.3">U3</text>
<text x="2048.4 2054.4 2060.4 2066.4 2072.4 2078.4" y="1125.50" font-size="9.3" fill="#000" font-weight="bold" stroke="#000" stroke-width="0.3">LT1792</text>
<rect x="2056.00" y="1106.00" width="47.00" height="1" fill="#0000ff"/>
<rect x="2002.00" y="1114.00" width="24.00" height="1" fill="#0000ff"/>
<rect x="2002.00" y="1114.00" width="1" height="33.00" fill="#0000ff"/>
<polygon points="1994.5,1146.5 2011.5,1146.5 2002.5,1154.5" fill="none" stroke="#0000ff" stroke-width="1.0" shape-rendering="crispEdges"/>
<rect x="1833.00" y="884.00" width="32.00" height="1" fill="#0000ff"/>
<rect x="2039.00" y="830.00" width="195.00" height="1" fill="#0000ff"/>
<rect x="2215.00" y="828.00" width="5" height="5" fill="#0000ff"/>
<polyline points="2233.5,830.5 2237.5,830.5 2241.5,822.5 2248.5,837.5 2256.5,822.5 2264.5,837.5 2267.5,830.5 2270.5,830.5" fill="none" stroke="#000080" stroke-width="1.0" shape-rendering="crispEdges"/>
<text x="2242.5 2249.5 2255.5" y="819.80" font-size="9.3" fill="#000" font-weight="bold" stroke="#000" stroke-width="0.3">R11</text>
<text x="2243.5 2249.5 2255.5" y="846.80" font-size="9.3" fill="#000" font-weight="bold" stroke="#000" stroke-width="0.3">10k</text>
<rect x="2270.00" y="830.00" width="171.00" height="1" fill="#0000ff"/>
<rect x="2292.00" y="828.00" width="5" height="5" fill="#0000ff"/>
<rect x="2440.00" y="830.00" width="1" height="62.00" fill="#0000ff"/>
<rect x="2178.00" y="884.00" width="56.00" height="1" fill="#0000ff"/>
<rect x="2215.00" y="882.00" width="5" height="5" fill="#0000ff"/>
<polyline points="2233.5,884.5 2237.5,884.5 2241.5,876.5 2248.5,891.5 2256.5,876.5 2264.5,891.5 2267.5,884.5 2270.5,884.5" fill="none" stroke="#000080" stroke-width="1.0" shape-rendering="crispEdges"/>
<text x="2242.5 2249.5 2255.5" y="873.80" font-size="9.3" fill="#000" font-weight="bold" stroke="#000" stroke-width="0.3">R14</text>
<text x="2243.5 2249.5 2255.5" y="900.80" font-size="9.3" fill="#000" font-weight="bold" stroke="#000" stroke-width="0.3">1k5</text>
<rect x="2270.00" y="884.00" width="79.00" height="1" fill="#0000ff"/>
<rect x="2292.00" y="882.00" width="5" height="5" fill="#0000ff"/>
<rect x="2217.00" y="830.00" width="1" height="126.00" fill="#0000ff"/>
<line x1="2217.5" y1="955.5" x2="2217.5" y2="966.5" stroke="#000080" stroke-width="1.0" shape-rendering="crispEdges"/>
<line x1="2217.5" y1="970.5" x2="2217.5" y2="979.5" stroke="#000080" stroke-width="1.0" shape-rendering="crispEdges"/>
<line x1="2208.5" y1="966.5" x2="2225.5" y2="966.5" stroke="#000080" stroke-width="1.0" shape-rendering="crispEdges"/>
<line x1="2208.5" y1="970.5" x2="2225.5" y2="970.5" stroke="#000080" stroke-width="1.0" shape-rendering="crispEdges"/>
<text x="2220.8 2227.8" y="960.50" font-size="9.3" fill="#000" font-weight="bold" stroke="#000" stroke-width="0.3">C6</text>
<text x="2220.8 2226.8 2232.8" y="983.30" font-size="9.3" fill="#000" font-weight="bold" stroke="#000" stroke-width="0.3">22μ</text>
<rect x="2217.00" y="979.00" width="1" height="21.00" fill="#0000ff"/>
<polygon points="2209.5,999.5 2226.5,999.5 2217.5,1007.5" fill="none" stroke="#0000ff" stroke-width="1.0" shape-rendering="crispEdges"/>
<rect x="2294.00" y="830.00" width="1" height="18.00" fill="#0000ff"/>
<rect x="2294.00" y="871.00" width="1" height="14.00" fill="#0000ff"/>
<line x1="2294.5" y1="848.5" x2="2294.5" y2="859.5" stroke="#000080" stroke-width="1.0" shape-rendering="crispEdges"/>
<line x1="2294.5" y1="863.5" x2="2294.5" y2="872.5" stroke="#000080" stroke-width="1.0" shape-rendering="crispEdges"/>
<line x1="2285.5" y1="859.5" x2="2302.5" y2="859.5" stroke="#000080" stroke-width="1.0" shape-rendering="crispEdges"/>
<line x1="2285.5" y1="862.5" x2="2302.5" y2="862.5" stroke="#000080" stroke-width="1.0" shape-rendering="crispEdges"/>
<text x="2298.2 2305.2" y="853.30" font-size="9.3" fill="#000" font-weight="bold" stroke="#000" stroke-width="0.3">C4</text>
<text x="2298.2 2304.2 2310.2" y="876.10" font-size="9.3" fill="#000" font-weight="bold" stroke="#000" stroke-width="0.3">2μ2</text>
<polygon points="2348.5,876.5 2379.5,891.5 2348.5,907.5" fill="none" stroke="#000080" stroke-width="1.0" shape-rendering="crispEdges"/>
<line x1="2363.5" y1="883.5" x2="2363.5" y2="876.5" stroke="#000080" stroke-width="1.0" shape-rendering="crispEdges"/>
<line x1="2363.5" y1="899.5" x2="2363.5" y2="907.5" stroke="#000080" stroke-width="1.0" shape-rendering="crispEdges"/>
<line x1="2349.5" y1="884.5" x2="2354.5" y2="884.5" stroke="#000080" stroke-width="1.0" shape-rendering="crispEdges"/>
<line x1="2349.5" y1="899.5" x2="2354.5" y2="899.5" stroke="#000080" stroke-width="1.0" shape-rendering="crispEdges"/>
<line x1="2352.5" y1="896.5" x2="2352.5" y2="901.5" stroke="#000080" stroke-width="1.0" shape-rendering="crispEdges"/>
<line x1="2365.5" y1="882.5" x2="2370.5" y2="882.5" stroke="#000080" stroke-width="1.0" shape-rendering="crispEdges"/>
<line x1="2368.5" y1="879.5" x2="2368.5" y2="884.5" stroke="#000080" stroke-width="1.0" shape-rendering="crispEdges"/>
<line x1="2365.5" y1="901.5" x2="2370.5" y2="901.5" stroke="#000080" stroke-width="1.0" shape-rendering="crispEdges"/>
<rect x="2363.00" y="868.00" width="1" height="9.00" fill="#0000ff"/>
<rect x="2363.00" y="907.00" width="1" height="9.00" fill="#0000ff"/>
<polygon points="2363.5,837.5 2369.5,843.5 2369.5,862.5 2363.5,868.5 2357.5,862.5 2357.5,843.5" fill="none" stroke="#0000ff" stroke-width="1.0" shape-rendering="crispEdges"/>
<text transform="translate(2366.40,853.75) rotate(-90)" x="-8.0 0.0" y="0.00" font-size="11.5" fill="#000" font-weight="bold" stroke="#000" stroke-width="0.3">VP</text>
<polygon points="2363.5,915.5 2369.5,921.5 2369.5,939.5 2363.5,945.5 2357.5,939.5 2357.5,921.5" fill="none" stroke="#0000ff" stroke-width="1.0" shape-rendering="crispEdges"/>
<text transform="translate(2366.40,928.60) rotate(-90)" x="-8.5 -0.5" y="0.00" font-size="11.5" fill="#000" font-weight="bold" stroke="#000" stroke-width="0.3">VN</text>
<text x="2371.2 2378.2" y="879.70" font-size="9.3" fill="#000" font-weight="bold" stroke="#000" stroke-width="0.3">U4</text>
<text x="2371.2 2377.2 2383.2 2389.2 2395.2 2401.2" y="910.50" font-size="9.3" fill="#000" font-weight="bold" stroke="#000" stroke-width="0.3">LT1792</text>
<rect x="2325.00" y="899.00" width="24.00" height="1" fill="#0000ff"/>
<rect x="2325.00" y="899.00" width="1" height="32.00" fill="#0000ff"/>
<polygon points="2317.5,930.5 2334.5,930.5 2325.5,938.5" fill="none" stroke="#0000ff" stroke-width="1.0" shape-rendering="crispEdges"/>
<rect x="2379.00" y="891.00" width="85.00" height="1" fill="#0000ff"/>
<rect x="2438.00" y="889.00" width="5" height="5" fill="#0000ff"/>
<polygon points="2463.5,891.5 2469.5,885.5 2511.5,885.5 2517.5,891.5 2511.5,897.5 2469.5,897.5" fill="none" stroke="#0000ff" stroke-width="1.0" shape-rendering="crispEdges"/>
<text x="2472.2 2477.2 2485.2 2491.2 2494.2 2500.2 2506.2" y="894.80" font-size="9.3" fill="#000" font-weight="bold" stroke="#000" stroke-width="0.3">zweipol</text>
<polygon points="1502.5,692.5 1508.5,698.5 1508.5,716.5 1502.5,722.5 1496.5,716.5 1496.5,698.5" fill="none" stroke="#0000ff" stroke-width="1.0" shape-rendering="crispEdges"/>
<text transform="translate(1505.20,707.05) rotate(-90)" x="-8.0 0.0" y="0.00" font-size="11.5" fill="#000" font-weight="bold" stroke="#000" stroke-width="0.3">VP</text>
<rect x="1502.00" y="722.00" width="1" height="28.00" fill="#0000ff"/>
<circle cx="1502.5" cy="764.5" r="15" fill="none" stroke="#000080" stroke-width="1.0" shape-rendering="crispEdges"/>
<line x1="1498.5" y1="755.5" x2="1507.5" y2="755.5" stroke="#000080" stroke-width="1.0" shape-rendering="crispEdges"/>
<line x1="1502.5" y1="750.5" x2="1502.5" y2="759.5" stroke="#000080" stroke-width="1.0" shape-rendering="crispEdges"/>
<line x1="1497.5" y1="774.5" x2="1507.5" y2="774.5" stroke="#000080" stroke-width="1.0" shape-rendering="crispEdges"/>
<rect x="1502.00" y="779.00" width="1" height="21.00" fill="#0000ff"/>
<polygon points="1494.5,799.5 1511.5,799.5 1502.5,807.5" fill="none" stroke="#0000ff" stroke-width="1.0" shape-rendering="crispEdges"/>
<text x="1514.2 1521.2" y="748.60" font-size="9.3" fill="#000" font-weight="bold" stroke="#000" stroke-width="0.3">V2</text>
<text x="1514.2" y="787.40" font-size="9.3" fill="#000" font-weight="bold" stroke="#000" stroke-width="0.3">7</text>
<polygon points="1556.5,692.5 1562.5,698.5 1562.5,716.5 1556.5,722.5 1550.5,716.5 1550.5,698.5" fill="none" stroke="#0000ff" stroke-width="1.0" shape-rendering="crispEdges"/>
<text transform="translate(1559.20,707.05) rotate(-90)" x="-8.5 -0.5" y="0.00" font-size="11.5" fill="#000" font-weight="bold" stroke="#000" stroke-width="0.3">VN</text>
<rect x="1556.00" y="722.00" width="1" height="28.00" fill="#0000ff"/>
<circle cx="1556.5" cy="764.5" r="15" fill="none" stroke="#000080" stroke-width="1.0" shape-rendering="crispEdges"/>
<line x1="1552.5" y1="755.5" x2="1561.5" y2="755.5" stroke="#000080" stroke-width="1.0" shape-rendering="crispEdges"/>
<line x1="1556.5" y1="750.5" x2="1556.5" y2="759.5" stroke="#000080" stroke-width="1.0" shape-rendering="crispEdges"/>
<line x1="1551.5" y1="774.5" x2="1561.5" y2="774.5" stroke="#000080" stroke-width="1.0" shape-rendering="crispEdges"/>
<rect x="1556.00" y="779.00" width="1" height="21.00" fill="#0000ff"/>
<polygon points="1548.5,799.5 1565.5,799.5 1556.5,807.5" fill="none" stroke="#0000ff" stroke-width="1.0" shape-rendering="crispEdges"/>
<text x="1568.2 1575.2" y="748.60" font-size="9.3" fill="#000" font-weight="bold" stroke="#000" stroke-width="0.3">V3</text>
<text x="1568.2 1571.2" y="787.40" font-size="9.3" fill="#000" font-weight="bold" stroke="#000" stroke-width="0.3">-7</text>
<polygon points="1610.5,692.5 1616.5,698.5 1616.5,716.5 1610.5,722.5 1604.5,716.5 1604.5,698.5" fill="none" stroke="#0000ff" stroke-width="1.0" shape-rendering="crispEdges"/>
<text transform="translate(1613.20,707.05) rotate(-90)" x="-8.5 -0.5" y="0.00" font-size="11.5" fill="#000" font-weight="bold" stroke="#000" stroke-width="0.3">VH</text>
<rect x="1610.00" y="722.00" width="1" height="28.00" fill="#0000ff"/>
<circle cx="1610.5" cy="764.5" r="15" fill="none" stroke="#000080" stroke-width="1.0" shape-rendering="crispEdges"/>
<line x1="1606.5" y1="755.5" x2="1615.5" y2="755.5" stroke="#000080" stroke-width="1.0" shape-rendering="crispEdges"/>
<line x1="1610.5" y1="750.5" x2="1610.5" y2="759.5" stroke="#000080" stroke-width="1.0" shape-rendering="crispEdges"/>
<line x1="1605.5" y1="774.5" x2="1615.5" y2="774.5" stroke="#000080" stroke-width="1.0" shape-rendering="crispEdges"/>
<rect x="1610.00" y="779.00" width="1" height="21.00" fill="#0000ff"/>
<polygon points="1602.5,799.5 1619.5,799.5 1610.5,807.5" fill="none" stroke="#0000ff" stroke-width="1.0" shape-rendering="crispEdges"/>
<text x="1622.2 1629.2" y="748.60" font-size="9.3" fill="#000" font-weight="bold" stroke="#000" stroke-width="0.3">V4</text>
<text x="1622.2 1628.2 1631.2" y="787.40" font-size="9.3" fill="#000" font-weight="bold" stroke="#000" stroke-width="0.3">2.5</text>
<polygon points="1548.5,844.5 1554.5,850.5 1554.5,862.5 1548.5,868.5 1542.5,862.5 1542.5,850.5" fill="none" stroke="#0000ff" stroke-width="1.0" shape-rendering="crispEdges"/>
<text transform="translate(1551.20,856.80) rotate(-90)" x="-4.5" y="0.00" font-size="11.5" fill="#000" font-weight="bold" stroke="#000" stroke-width="0.3">A</text>
<rect x="1548.00" y="868.00" width="1" height="28.00" fill="#0000ff"/>
<circle cx="1548.5" cy="910.5" r="15" fill="none" stroke="#000080" stroke-width="1.0" shape-rendering="crispEdges"/>
<line x1="1544.5" y1="901.5" x2="1553.5" y2="901.5" stroke="#000080" stroke-width="1.0" shape-rendering="crispEdges"/>
<line x1="1548.5" y1="896.5" x2="1548.5" y2="905.5" stroke="#000080" stroke-width="1.0" shape-rendering="crispEdges"/>
<line x1="1543.5" y1="919.5" x2="1553.5" y2="919.5" stroke="#000080" stroke-width="1.0" shape-rendering="crispEdges"/>
<rect x="1548.00" y="925.00" width="1" height="21.00" fill="#0000ff"/>
<polygon points="1540.5,945.5 1557.5,945.5 1548.5,953.5" fill="none" stroke="#0000ff" stroke-width="1.0" shape-rendering="crispEdges"/>
<text x="1524.0 1531.0" y="894.40" font-size="9.3" fill="#000" font-weight="bold" stroke="#000" stroke-width="0.3">V5</text>
<polygon points="1587.5,844.5 1593.5,850.5 1593.5,862.5 1587.5,868.5 1581.5,862.5 1581.5,850.5" fill="none" stroke="#0000ff" stroke-width="1.0" shape-rendering="crispEdges"/>
<text transform="translate(1590.20,856.80) rotate(-90)" x="-4.5" y="0.00" font-size="11.5" fill="#000" font-weight="bold" stroke="#000" stroke-width="0.3">B</text>
<rect x="1587.00" y="868.00" width="1" height="28.00" fill="#0000ff"/>
<circle cx="1587.5" cy="910.5" r="15" fill="none" stroke="#000080" stroke-width="1.0" shape-rendering="crispEdges"/>
<line x1="1583.5" y1="901.5" x2="1592.5" y2="901.5" stroke="#000080" stroke-width="1.0" shape-rendering="crispEdges"/>
<line x1="1587.5" y1="896.5" x2="1587.5" y2="905.5" stroke="#000080" stroke-width="1.0" shape-rendering="crispEdges"/>
<line x1="1582.5" y1="919.5" x2="1592.5" y2="919.5" stroke="#000080" stroke-width="1.0" shape-rendering="crispEdges"/>
<rect x="1587.00" y="925.00" width="1" height="21.00" fill="#0000ff"/>
<polygon points="1579.5,945.5 1596.5,945.5 1587.5,953.5" fill="none" stroke="#0000ff" stroke-width="1.0" shape-rendering="crispEdges"/>
<text x="1598.4 1605.4" y="894.40" font-size="9.3" fill="#000" font-weight="bold" stroke="#000" stroke-width="0.3">V1</text>
<text x="1510.2 1517.2 1520.2 1527.2 1534.2 1537.2 1543.2 1546.2 1550.2 1553.2 1559.2 1568.2 1574.2 1580.2 1584.2 1587.2 1593.2 1599.2" y="974.80" font-size="9.3" fill="#000" font-weight="bold" stroke="#000" stroke-width="0.3">SINE(0 {i_max} 50)</text>
<text x="1524.3 1531.3 1540.3 1546.3 1549.3 1555.3 1561.3 1567.3 1576.3 1579.3 1585.3 1588.3 1594.3 1600.3 1606.3 1615.3 1621.3 1624.3 1630.3 1633.3 1639.3 1645.3 1651.3 1660.3 1663.3 1669.3 1672.3 1678.3 1684.3 1690.3 1699.3 1705.3 1708.3 1714.3" y="996.80" font-size="9.3" fill="#000" font-weight="bold" stroke="#000" stroke-width="0.3">PWL(100m 0 100m1 1 600m 1 600m1 0)</text>
<text x="1536.9 1539.9 1542.9 1548.9 1551.9 1557.9 1563.9 1566.9 1569.9 1575.9 1584.9 1590.9 1593.9 1596.9 1599.9 1605.9 1608.9 1611.9 1614.9 1620.9 1626.9 1629.9 1635.9" y="514.40" font-size="9.3" fill="#000" font-weight="bold" stroke="#000" stroke-width="0.3">;.step temp list -20 80</text>
<text x="1533.0 1536.0 1539.0 1545.0 1548.0 1554.0 1560.0 1563.0 1569.0 1575.0 1579.0 1585.0 1594.0 1597.0 1600.0 1606.0 1615.0 1621.0 1627.0 1630.0 1633.0 1636.0 1642.0 1645.0 1648.0 1654.0 1657.0 1663.0 1669.0 1672.0 1678.0 1684.0 1687.0 1693.0" y="538.20" font-size="9.3" fill="#000" font-weight="bold" stroke="#000" stroke-width="0.3">;.step param i_max list 5 10 20 40</text>
<text x="1533.4 1536.4 1542.4 1548.4 1552.4 1558.4 1567.4 1570.4 1573.4 1579.4 1588.4 1594.4 1600.4 1606.4 1612.4" y="551.20" font-size="9.3" fill="#000" font-weight="bold" stroke="#000" stroke-width="0.3">.param i_max=50</text>
<text x="1545.3 1548.3 1551.3 1555.3 1561.3 1567.3 1570.3 1576.3 1579.3" y="656.80" font-size="9.3" fill="#000" font-weight="bold" stroke="#000" stroke-width="0.3">.tran 1.2</text>
</svg>
</body></html>
